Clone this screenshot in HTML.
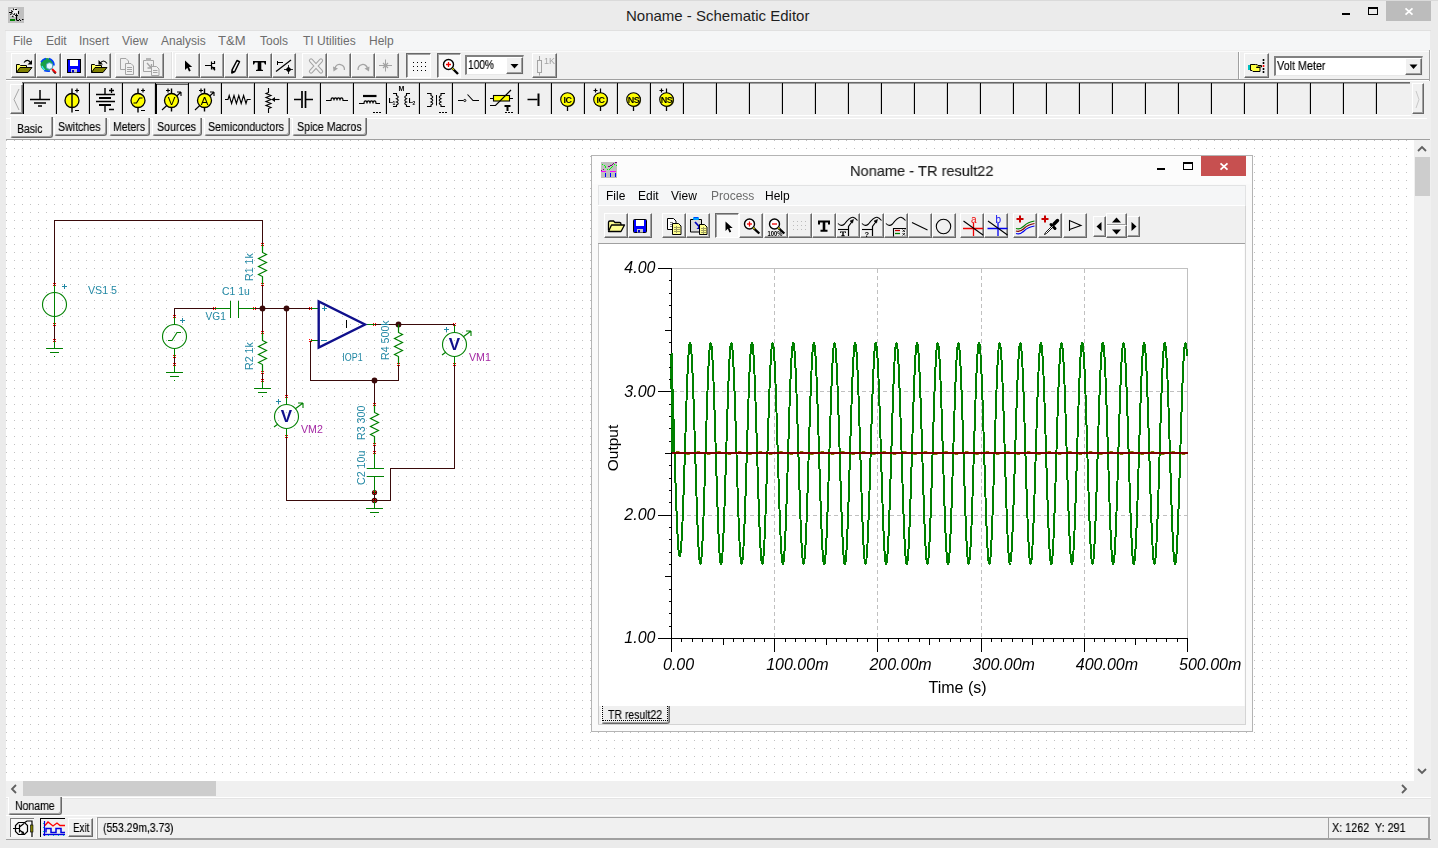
<!DOCTYPE html><html><head><meta charset="utf-8"><title>Noname - Schematic Editor</title><style>
*{box-sizing:border-box;margin:0;padding:0}
html,body{width:1438px;height:848px;overflow:hidden}
body{background:#ebebeb;font-family:"Liberation Sans",sans-serif;position:relative;font-size:12px;color:#000}
.a{position:absolute}
.t{position:absolute;white-space:nowrap;line-height:1}
.btn{position:absolute;background:#f0f0f0;border-top:1px solid #fff;border-left:1px solid #fff;border-right:1px solid #696969;border-bottom:1px solid #696969;box-shadow:inset -1px -1px 0 #a0a0a0}
.btnp{position:absolute;background:#f8f8f8;border-top:1px solid #696969;border-left:1px solid #696969;border-right:1px solid #fff;border-bottom:1px solid #fff;box-shadow:inset 1px 1px 0 #a0a0a0}
.sunk{position:absolute;border-top:1px solid #a0a0a0;border-left:1px solid #a0a0a0;border-right:1px solid #fff;border-bottom:1px solid #fff}
svg{position:absolute;overflow:visible}
</style></head><body>
<div class="a" style="left:0px;top:0px;width:1438px;height:1px;background:#dadada;"></div>
<div class="a" style="left:5px;top:30px;width:1426px;height:1px;background:#e0e0e0;"></div>
<div class="t" style="left:626px;top:8px;font-size:15px;color:#1e1e1e;">Noname - Schematic Editor</div>
<svg style="left:8px;top:7px" width="16" height="16" viewBox="0 0 16 16" ><rect width="16" height="16" fill="#c0c0c0"/><circle cx="6" cy="5.500" r="4.500" fill="#f4f4f4"/><path d="M1 5.500h3M3 3.500l2 1.500M2 7.500l2.500-1M5 1.500l1 1.500M7 2.500h2M4 9l1.500 1M7 6.500l-1.500 1.500M10.500 4v3" stroke="#000" stroke-width="1.100" fill="none"/><path d="M8.500 6.500v7" stroke="#000" stroke-width="1.200"/><path d="M7 8.500h3" stroke="#000"/><rect x="2" y="12" width="5" height="2" fill="#008000"/><path d="M9 13.500h2M12 13.500h1M14 12.500h1.500M11 12.500h1" stroke="#000" stroke-width="1"/></svg>
<div class="a" style="left:1342px;top:13px;width:8px;height:2px;background:#000;"></div>
<div class="a" style="left:1368px;top:7px;width:10px;height:8px;border:1px solid #000;border-top:2px solid #000"></div>
<div class="a" style="left:1386px;top:1px;width:45px;height:20px;background:#bcbcbc;"></div>
<svg style="left:1405px;top:8px" width="8" height="7" viewBox="0 0 8 7"><path d="M0.5 0.3 L7.5 6.7 M7.5 0.3 L0.5 6.7" stroke="#fff" stroke-width="1.8" fill="none"/></svg>
<div class="a" style="left:6px;top:31px;width:1424px;height:19px;background:#f5f6f7;"></div>
<div class="t" style="left:13px;top:35px;font-size:12px;color:#6d6d6d;">File</div>
<div class="t" style="left:46px;top:35px;font-size:12px;color:#6d6d6d;">Edit</div>
<div class="t" style="left:79px;top:35px;font-size:12px;color:#6d6d6d;">Insert</div>
<div class="t" style="left:122px;top:35px;font-size:12px;color:#6d6d6d;">View</div>
<div class="t" style="left:161px;top:35px;font-size:12px;color:#6d6d6d;">Analysis</div>
<div class="t" style="left:218px;top:35px;font-size:12px;color:#6d6d6d;transform:scaleX(1.09);transform-origin:0 0">T&amp;M</div>
<div class="t" style="left:260px;top:35px;font-size:12px;color:#6d6d6d;">Tools</div>
<div class="t" style="left:303px;top:35px;font-size:12px;color:#6d6d6d;">TI Utilities</div>
<div class="t" style="left:369px;top:35px;font-size:12px;color:#6d6d6d;">Help</div>
<div class="a" style="left:6px;top:50px;width:1425px;height:31px;background:#f0f0f0;"></div>
<div class="a" style="left:6px;top:79px;width:1425px;height:1px;background:#a0a0a0;"></div>
<div class="a" style="left:6px;top:80px;width:1425px;height:1px;background:#fff;"></div>
<div class="a" style="left:1429px;top:50px;width:1px;height:90px;background:#a4a4a4;"></div>
<div class="a" style="left:1430px;top:50px;width:1px;height:90px;background:#f8f8f8;"></div>
<div class="btn" style="left:11px;top:53px;width:25px;height:25px"></div>
<div class="btn" style="left:36px;top:53px;width:25px;height:25px"></div>
<div class="btn" style="left:61px;top:53px;width:25px;height:25px"></div>
<div class="btn" style="left:86px;top:53px;width:25px;height:25px"></div>
<div class="btn" style="left:115px;top:53px;width:25px;height:25px"></div>
<div class="btn" style="left:140px;top:53px;width:24px;height:25px"></div>
<div class="btn" style="left:175px;top:53px;width:25px;height:25px"></div>
<div class="btn" style="left:200px;top:53px;width:24px;height:25px"></div>
<div class="btn" style="left:224px;top:53px;width:24px;height:25px"></div>
<div class="btn" style="left:248px;top:53px;width:24px;height:25px"></div>
<div class="btn" style="left:272px;top:53px;width:24px;height:25px"></div>
<div class="btn" style="left:302px;top:53px;width:25px;height:25px"></div>
<div class="btn" style="left:327px;top:53px;width:24px;height:25px"></div>
<div class="btn" style="left:351px;top:53px;width:24px;height:25px"></div>
<div class="btn" style="left:375px;top:53px;width:24px;height:25px"></div>
<div class="a" style="left:171px;top:52px;width:1px;height:27px;background:#e2e2e2"></div><div class="a" style="left:172px;top:52px;width:1px;height:27px;background:#fff"></div>
<div class="a" style="left:6px;top:51px;width:1423px;height:1px;background:#fafafa"></div>
<div class="btnp" style="left:406px;top:53px;width:25px;height:25px"></div>
<div class="btnp" style="left:437px;top:53px;width:24px;height:25px"></div>
<div class="btn" style="left:532px;top:53px;width:25px;height:25px"></div>
<div class="a" style="left:465px;top:55px;width:59px;height:20px;background:#fff;border:1px solid #696969;border-top:2px solid #808080;border-left:2px solid #808080;border-right:1px solid #e8e8e8;border-bottom:1px solid #e8e8e8"></div>
<div class="btn" style="left:506px;top:57px;width:17px;height:17px"></div>
<div class="t" style="left:468.4px;top:59px;font-size:12.5px;color:#000;transform:scaleX(0.813);transform-origin:0 0;will-change:transform;-webkit-text-stroke:0.15px #000">100%</div>
<div class="a" style="left:1238px;top:52px;width:1px;height:27px;background:#a0a0a0"></div><div class="a" style="left:1239px;top:52px;width:1px;height:27px;background:#fff"></div>
<div class="btn" style="left:1244px;top:53px;width:25px;height:25px"></div>
<div class="a" style="left:1274px;top:56px;width:149px;height:20px;background:#fff;border:1px solid #696969;border-top:2px solid #808080;border-left:2px solid #808080;border-right:1px solid #e8e8e8;border-bottom:1px solid #e8e8e8"></div>
<div class="btn" style="left:1405px;top:58px;width:17px;height:17px"></div>
<div class="t" style="left:1277px;top:60px;font-size:12.5px;color:#000;transform:scaleX(0.862);transform-origin:0 0;will-change:transform;-webkit-text-stroke:0.15px #000">Volt Meter</div>
<svg style="left:0;top:0" width="1438" height="90" viewBox="0 0 1438 90"><path d="M510.500 64h8l-4 4.500z" fill="#000"/><path d="M1409.500 64.500h8l-4 4.500z" fill="#000"/><path d="M16.5 72.5V64.5h3l1 1h6v3" fill="#ffff60" stroke="#000"/><path d="M16.5 72.5l3.500-5h12l-4 5z" fill="#808000" stroke="#000"/><path d="M24 62.5q3.500-4.500 7 0.500" stroke="#000" fill="none" stroke-width="1.100"/><path d="M32 60v4.500h-4.500z" fill="#000"/><path d="M91.5 72.5V64.5h3l1 1h6v3" fill="#ffff60" stroke="#000"/><path d="M91.5 72.5l3.500-5h12l-4 5z" fill="#808000" stroke="#000"/><path d="M100 63.5q3.500-5 7 0" stroke="#000" fill="none" stroke-width="1.100"/><path d="M98.5 60v4.500h4.500z" fill="#000"/><circle cx="47" cy="64.500" r="6.500" fill="#18a048"/><path d="M41 62q2-3 5-3.500M44 70.500q3 1 6 0.500" stroke="#0040ff" stroke-width="1.500" fill="none"/><path d="M49 58.500q5 2 5 7" stroke="#0040ff" stroke-width="1.700" fill="none"/><path d="M42 66q1 3 3 4" stroke="#40e0ff" stroke-width="1.300" fill="none"/><circle cx="49.500" cy="66" r="3.300" fill="#e8f8ff" stroke="#50a0c0" stroke-width="1"/><path d="M52 69l4 4" stroke="#f00000" stroke-width="2"/><path d="M53 71.500l2.500 2.500" stroke="#000" stroke-width="1"/><rect x="67.500" y="59.500" width="13" height="13" fill="#0000ff" stroke="#000"/><rect x="70" y="60" width="8" height="6" fill="#fff"/><rect x="71" y="69" width="6" height="3.500" fill="#c8c8c8"/><rect x="72" y="70" width="2" height="2.500" fill="#0000c0"/><path d="M120.500 58.500h5.500l2.500 2.500v8.500h-8z" stroke="#a4a4a4" fill="#f0f0f0"/><path d="M125.500 63.500h5.500l2.500 2.500v8.500h-8z" stroke="#a4a4a4" fill="#f0f0f0"/><path d="M127 67.500h5M127 69.500h5M127 71.500h5" stroke="#a4a4a4"/><path d="M143.500 60.500h10v11h-10z" stroke="#a4a4a4" fill="#f0f0f0"/><rect x="146" y="58" width="5" height="3" fill="#b4b4b4"/><path d="M147 63l4 4.500M151.500 64v4h-4" stroke="#a4a4a4" stroke-width="1.300" fill="none"/><path d="M151.500 66.500h5l2.500 2.500v6.500h-7.500z" stroke="#a4a4a4" fill="#f0f0f0"/><path d="M153 70.500h4.500M153 72.500h4.500" stroke="#a4a4a4"/><path d="M185 60.500v9.500l2.300-2.200 1.700 3.700 1.700-0.800-1.700-3.600h3.200z" fill="#000"/><path d="M205 65.500h6M211.500 61.500v8M211.500 63.500h3v-2.500M211.500 67.500h3v3" stroke="#000" fill="none" stroke-width="1.200"/><path d="M212.500 66l3 3.500h-3z" fill="#000"/><path d="M237 60.500l2.500 1.200-4.700 9.800-3 1.500 0.300-3.200z" fill="#f8f8f8" stroke="#000" stroke-width="1.500" stroke-linejoin="round"/><path d="M231.800 73l3-1.500-2.700-1.300z" fill="#000"/><path d="M253 61h13v3.500h-1l-1-2h-2.700v7l1.700 0.600v0.900h-7v-0.900l1.700-0.600v-7h-2.700l-1 2h-1z" fill="#000"/><path d="M276 71.500L291 60" stroke="#000" fill="none" stroke-width="1.200"/><path d="M277.500 61v4M277 62.500h6" stroke="#000" fill="none"/><path d="M288.500 66.500l3 3-3 3-3-3z" fill="#000"/><path d="M284 69.500h9M288.500 65v9" stroke="#000" fill="none" stroke-width="0.800"/><path d="M311 60.500l10 11M321 60.500l-10 11" stroke="#a4a4a4" stroke-width="4.200" stroke-linecap="round"/><path d="M311 60.500l10 11M321 60.500l-10 11" stroke="#f0f0f0" stroke-width="2.200" stroke-linecap="round"/><path d="M335 68.500a4.700 4.700 0 1 1 9.400 1.500" stroke="#a4a4a4" stroke-width="1.300" fill="none"/><path d="M333 66.500l0.500 5 4.500-3z" fill="#a4a4a4"/><path d="M367.500 68.500a4.700 4.700 0 1 0-9.400 1.500" stroke="#a4a4a4" stroke-width="1.300" fill="none"/><path d="M369.500 66.500l-0.500 5-4.500-3z" fill="#a4a4a4"/><path d="M379 65.500h13M385.500 59.500v12" stroke="#a4a4a4" stroke-width="1"/><path d="M383 63l5 5M388 63l-5 5" stroke="#a4a4a4" stroke-width="1.200"/><rect x="413" y="62" width="1" height="1" fill="#000"/><rect x="413" y="66" width="1" height="1" fill="#000"/><rect x="413" y="70" width="1" height="1" fill="#000"/><rect x="417" y="62" width="1" height="1" fill="#000"/><rect x="417" y="66" width="1" height="1" fill="#000"/><rect x="417" y="70" width="1" height="1" fill="#000"/><rect x="421" y="62" width="1" height="1" fill="#000"/><rect x="421" y="66" width="1" height="1" fill="#000"/><rect x="421" y="70" width="1" height="1" fill="#000"/><rect x="425" y="62" width="1" height="1" fill="#000"/><rect x="425" y="66" width="1" height="1" fill="#000"/><rect x="425" y="70" width="1" height="1" fill="#000"/><circle cx="448.500" cy="64.500" r="5" fill="#fff" stroke="#000" stroke-width="1.400"/><path d="M446 64.500h5M448.500 62v5" stroke="#f00000" stroke-width="1.300"/><path d="M452.500 68.500l5.500 5.500" stroke="#000" stroke-width="2.400"/><path d="M452.300 68.300l1.500 1.500" stroke="#e0e000" stroke-width="1.200"/><path d="M539.500 56v4.500M539.500 72.500v3" stroke="#a4a4a4"/><rect x="537.500" y="60.500" width="4" height="12" fill="none" stroke="#a4a4a4"/><text x="544" y="63.500" font-family="Liberation Sans" font-size="9" fill="#a4a4a4">1K</text><path d="M1250.500 64.500h5q2.500 0 2.500 1h3.500v1.500h-5v0.500h3.500v4h-7l-1-1h-1.500z" fill="#ffff40" stroke="#000" stroke-width="1"/><rect x="1248" y="65" width="2" height="5" fill="#00c0c0"/><path d="M1263.500 59v2M1263.500 62v2M1263.500 68v2M1263.500 71v2" stroke="#000" stroke-width="1.600"/><path d="M1263.500 65v2" stroke="#ff0000" stroke-width="1.600"/></svg>
<div class="a" style="left:6px;top:81px;width:1425px;height:58px;background:#f0f0f0;"></div>
<div class="a" style="left:22px;top:82px;width:1388px;height:1px;background:#696969"></div>
<div class="a" style="left:22px;top:83px;width:1388px;height:1px;background:#a0a0a0"></div>
<div class="a" style="left:10px;top:115px;width:1401px;height:1px;background:#fff"></div>
<div class="a" style="left:6px;top:118px;width:1421px;height:1px;background:#fff"></div>
<div class="btn" style="left:10px;top:84px;width:13px;height:30px"></div>
<svg style="left:13px;top:89px" width="7" height="21" viewBox="0 0 7 21" ><path d="M6 0L1 10.500L6 21" stroke="#a8a8a8" fill="none"/></svg>
<div class="btn" style="left:1412px;top:83px;width:12px;height:31px"></div>
<svg style="left:1415px;top:91px" width="5" height="17" viewBox="0 0 5 17" ><path d="M1 0L4 8.500L1 17" stroke="#c8c8c8" fill="none"/></svg>
<div class="a" style="left:23px;top:83px;width:1px;height:31px;background:#000"></div>
<div class="a" style="left:56px;top:83px;width:1px;height:31px;background:#000"></div>
<div class="a" style="left:55px;top:84px;width:1px;height:30px;background:#d0d0d0"></div>
<div class="a" style="left:89px;top:83px;width:1px;height:31px;background:#000"></div>
<div class="a" style="left:88px;top:84px;width:1px;height:30px;background:#d0d0d0"></div>
<div class="a" style="left:122px;top:83px;width:1px;height:31px;background:#000"></div>
<div class="a" style="left:121px;top:84px;width:1px;height:30px;background:#d0d0d0"></div>
<div class="a" style="left:155px;top:83px;width:1px;height:31px;background:#000"></div>
<div class="a" style="left:154px;top:84px;width:1px;height:30px;background:#d0d0d0"></div>
<div class="a" style="left:188px;top:83px;width:1px;height:31px;background:#000"></div>
<div class="a" style="left:187px;top:84px;width:1px;height:30px;background:#d0d0d0"></div>
<div class="a" style="left:221px;top:83px;width:1px;height:31px;background:#000"></div>
<div class="a" style="left:220px;top:84px;width:1px;height:30px;background:#d0d0d0"></div>
<div class="a" style="left:254px;top:83px;width:1px;height:31px;background:#000"></div>
<div class="a" style="left:253px;top:84px;width:1px;height:30px;background:#d0d0d0"></div>
<div class="a" style="left:287px;top:83px;width:1px;height:31px;background:#000"></div>
<div class="a" style="left:286px;top:84px;width:1px;height:30px;background:#d0d0d0"></div>
<div class="a" style="left:320px;top:83px;width:1px;height:31px;background:#000"></div>
<div class="a" style="left:319px;top:84px;width:1px;height:30px;background:#d0d0d0"></div>
<div class="a" style="left:353px;top:83px;width:1px;height:31px;background:#000"></div>
<div class="a" style="left:352px;top:84px;width:1px;height:30px;background:#d0d0d0"></div>
<div class="a" style="left:386px;top:83px;width:1px;height:31px;background:#000"></div>
<div class="a" style="left:385px;top:84px;width:1px;height:30px;background:#d0d0d0"></div>
<div class="a" style="left:419px;top:83px;width:1px;height:31px;background:#000"></div>
<div class="a" style="left:418px;top:84px;width:1px;height:30px;background:#d0d0d0"></div>
<div class="a" style="left:452px;top:83px;width:1px;height:31px;background:#000"></div>
<div class="a" style="left:451px;top:84px;width:1px;height:30px;background:#d0d0d0"></div>
<div class="a" style="left:485px;top:83px;width:1px;height:31px;background:#000"></div>
<div class="a" style="left:484px;top:84px;width:1px;height:30px;background:#d0d0d0"></div>
<div class="a" style="left:518px;top:83px;width:1px;height:31px;background:#000"></div>
<div class="a" style="left:517px;top:84px;width:1px;height:30px;background:#d0d0d0"></div>
<div class="a" style="left:551px;top:83px;width:1px;height:31px;background:#000"></div>
<div class="a" style="left:550px;top:84px;width:1px;height:30px;background:#d0d0d0"></div>
<div class="a" style="left:584px;top:83px;width:1px;height:31px;background:#000"></div>
<div class="a" style="left:583px;top:84px;width:1px;height:30px;background:#d0d0d0"></div>
<div class="a" style="left:617px;top:83px;width:1px;height:31px;background:#000"></div>
<div class="a" style="left:616px;top:84px;width:1px;height:30px;background:#d0d0d0"></div>
<div class="a" style="left:650px;top:83px;width:1px;height:31px;background:#000"></div>
<div class="a" style="left:649px;top:84px;width:1px;height:30px;background:#d0d0d0"></div>
<div class="a" style="left:683px;top:83px;width:1px;height:31px;background:#000"></div>
<div class="a" style="left:682px;top:84px;width:1px;height:30px;background:#d0d0d0"></div>
<div class="a" style="left:716px;top:83px;width:1px;height:31px;background:#000"></div>
<div class="a" style="left:715px;top:84px;width:1px;height:30px;background:#d0d0d0"></div>
<div class="a" style="left:749px;top:83px;width:1px;height:31px;background:#000"></div>
<div class="a" style="left:748px;top:84px;width:1px;height:30px;background:#d0d0d0"></div>
<div class="a" style="left:782px;top:83px;width:1px;height:31px;background:#000"></div>
<div class="a" style="left:781px;top:84px;width:1px;height:30px;background:#d0d0d0"></div>
<div class="a" style="left:815px;top:83px;width:1px;height:31px;background:#000"></div>
<div class="a" style="left:814px;top:84px;width:1px;height:30px;background:#d0d0d0"></div>
<div class="a" style="left:848px;top:83px;width:1px;height:31px;background:#000"></div>
<div class="a" style="left:847px;top:84px;width:1px;height:30px;background:#d0d0d0"></div>
<div class="a" style="left:881px;top:83px;width:1px;height:31px;background:#000"></div>
<div class="a" style="left:880px;top:84px;width:1px;height:30px;background:#d0d0d0"></div>
<div class="a" style="left:914px;top:83px;width:1px;height:31px;background:#000"></div>
<div class="a" style="left:913px;top:84px;width:1px;height:30px;background:#d0d0d0"></div>
<div class="a" style="left:947px;top:83px;width:1px;height:31px;background:#000"></div>
<div class="a" style="left:946px;top:84px;width:1px;height:30px;background:#d0d0d0"></div>
<div class="a" style="left:980px;top:83px;width:1px;height:31px;background:#000"></div>
<div class="a" style="left:979px;top:84px;width:1px;height:30px;background:#d0d0d0"></div>
<div class="a" style="left:1013px;top:83px;width:1px;height:31px;background:#000"></div>
<div class="a" style="left:1012px;top:84px;width:1px;height:30px;background:#d0d0d0"></div>
<div class="a" style="left:1046px;top:83px;width:1px;height:31px;background:#000"></div>
<div class="a" style="left:1045px;top:84px;width:1px;height:30px;background:#d0d0d0"></div>
<div class="a" style="left:1079px;top:83px;width:1px;height:31px;background:#000"></div>
<div class="a" style="left:1078px;top:84px;width:1px;height:30px;background:#d0d0d0"></div>
<div class="a" style="left:1112px;top:83px;width:1px;height:31px;background:#000"></div>
<div class="a" style="left:1111px;top:84px;width:1px;height:30px;background:#d0d0d0"></div>
<div class="a" style="left:1145px;top:83px;width:1px;height:31px;background:#000"></div>
<div class="a" style="left:1144px;top:84px;width:1px;height:30px;background:#d0d0d0"></div>
<div class="a" style="left:1178px;top:83px;width:1px;height:31px;background:#000"></div>
<div class="a" style="left:1177px;top:84px;width:1px;height:30px;background:#d0d0d0"></div>
<div class="a" style="left:1211px;top:83px;width:1px;height:31px;background:#000"></div>
<div class="a" style="left:1210px;top:84px;width:1px;height:30px;background:#d0d0d0"></div>
<div class="a" style="left:1244px;top:83px;width:1px;height:31px;background:#000"></div>
<div class="a" style="left:1243px;top:84px;width:1px;height:30px;background:#d0d0d0"></div>
<div class="a" style="left:1277px;top:83px;width:1px;height:31px;background:#000"></div>
<div class="a" style="left:1276px;top:84px;width:1px;height:30px;background:#d0d0d0"></div>
<div class="a" style="left:1310px;top:83px;width:1px;height:31px;background:#000"></div>
<div class="a" style="left:1309px;top:84px;width:1px;height:30px;background:#d0d0d0"></div>
<div class="a" style="left:1343px;top:83px;width:1px;height:31px;background:#000"></div>
<div class="a" style="left:1342px;top:84px;width:1px;height:30px;background:#d0d0d0"></div>
<div class="a" style="left:1376px;top:83px;width:1px;height:31px;background:#000"></div>
<div class="a" style="left:1375px;top:84px;width:1px;height:30px;background:#d0d0d0"></div>
<svg style="left:0;top:0" width="1438" height="120" viewBox="0 0 1438 120"><path d="M156.500 113.500V84" stroke="#000" stroke-width="1" fill="none" shape-rendering="crispEdges"/><path d="M157 84.500H188" stroke="#606060" stroke-width="1" fill="none" shape-rendering="crispEdges"/><path d="M40 90v9.500M30 99.500h20M34 103h12M38 106h4" stroke="#000" fill="none" stroke-width="1.500"/><circle cx="72" cy="100.500" r="7" fill="#ffff00" stroke="#000" stroke-width="1.300"/><path d="M72 88.500v24" stroke="#000" fill="none" stroke-width="1.400"/><path d="M75 90.500h4M77 88.500v4M75 110.500h4" stroke="#000" fill="none" stroke-width="1.200"/><path d="M105 88v6M96 94.500h19M96 101.500h19M105 105v7" stroke="#000" fill="none" stroke-width="1.400"/><path d="M99 98h12M99 105h12" stroke="#000" fill="none" stroke-width="2.200"/><path d="M109 90.500h5M111.5 88v5M109 109.500h5" stroke="#000" fill="none" stroke-width="1.300"/><circle cx="138" cy="100.500" r="7" fill="#ffff00" stroke="#000" stroke-width="1.300"/><path d="M138 88.500v5M138 107.500v5" stroke="#000" fill="none" stroke-width="1.400"/><path d="M133.5 103h3l3-5h3" stroke="#000" fill="none" stroke-width="1.200"/><path d="M141 90.500h4M143 88.500v4M141 110.500h4" stroke="#000" fill="none" stroke-width="1.200"/><path d="M162.0 110L181.0 92M181.0 92h-4M181.0 92v4" stroke="#000" fill="none" stroke-width="1.100"/><circle cx="171.5" cy="100.500" r="7" fill="#ffff00" stroke="#000" stroke-width="1.300"/><path d="M171.5 88.500v5M171.5 107.500v4" stroke="#000" fill="none" stroke-width="1.400"/><path d="M166.0 90.500h4M168.0 88.500v4" stroke="#000" fill="none" stroke-width="1.200"/><text x="171.5" y="104.500" text-anchor="middle" font-family="Liberation Sans" font-size="11.500" fill="#000">V</text><path d="M195.0 110L214.0 92M214.0 92h-4M214.0 92v4" stroke="#000" fill="none" stroke-width="1.100"/><circle cx="204.5" cy="100.500" r="7" fill="#ffff00" stroke="#000" stroke-width="1.300"/><path d="M204.5 88.500v5M204.5 107.500v4" stroke="#000" fill="none" stroke-width="1.400"/><path d="M199.0 90.500h4M201.0 88.500v4" stroke="#000" fill="none" stroke-width="1.200"/><text x="204.5" y="104.500" text-anchor="middle" font-family="Liberation Sans" font-size="11.500" fill="#000">A</text><path d="M225 99.500h3l1.200-4l2.400 8l2.400-8l2.400 8l2.400-8l2.400 8l2.400-8l2.400 8l1.200-4h3.500" stroke="#000" fill="none" stroke-width="1.100" stroke-linejoin="miter"/><path d="M268.500 88v4.500l-2.500 1l5 2l-5 2l5 2l-5 2l5 2l-5 2l5 2l-2.500 1v4.500" stroke="#000" fill="none" stroke-width="1.100"/><path d="M279.500 99.500h-7.500" stroke="#000" fill="none" stroke-width="1.100"/><path d="M271.500 99.500l3.500-2.500v5z" fill="#000"/><path d="M294 99.500h7M306 99.500h7" stroke="#000" fill="none" stroke-width="1.400"/><path d="M302 91v17M305.500 91v17" stroke="#000" fill="none" stroke-width="1.700"/><path d="M326 100.5H331a1.50 2.600 0 0 1 3.00 0a1.50 2.600 0 0 1 3.00 0a1.50 2.600 0 0 1 3.00 0a1.50 2.600 0 0 1 3.00 0H348" stroke="#000" fill="none" stroke-width="1.100"/><path d="M363 96h13.500" stroke="#000" fill="none" stroke-width="2.200"/><path d="M359 103.5H364a1.50 2.600 0 0 1 3.00 0a1.50 2.600 0 0 1 3.00 0a1.50 2.600 0 0 1 3.00 0a1.50 2.600 0 0 1 3.00 0H380" stroke="#000" fill="none" stroke-width="1.100"/><path d="M373 112.500h2M376 112.500h2M379 112.500h2" stroke="#000" stroke-width="1.200"/><path d="M393 93.500H396.5V95.500q3.5 1.600 0 3.200q3.5 1.600 0 3.200q3.5 1.600 0 3.200V106.500H393" stroke="#000" fill="none" stroke-width="1.100"/><path d="M410 93.500H406.5V95.500q-3.5 1.600 0 3.200q-3.5 1.600 0 3.200q-3.5 1.600 0 3.200V106.500H410" stroke="#000" fill="none" stroke-width="1.100"/><text x="398.500" y="91" font-family="Liberation Sans" font-size="7" font-weight="bold">M</text><text x="388.500" y="103" font-family="Liberation Sans" font-size="7.500" font-weight="bold">L</text><text x="392.500" y="105" font-family="Liberation Sans" font-size="5" font-weight="bold">1</text><text x="408.500" y="103" font-family="Liberation Sans" font-size="7.500" font-weight="bold">L</text><text x="412.500" y="105" font-family="Liberation Sans" font-size="5" font-weight="bold">2</text><path d="M427 93.500H431.0V95.500q3.5 1.600 0 3.200q3.5 1.600 0 3.200q3.5 1.600 0 3.200V106.500H427" stroke="#000" fill="none" stroke-width="1.100"/><path d="M445 93.500H441.0V95.500q-3.5 1.600 0 3.200q-3.5 1.600 0 3.200q-3.5 1.600 0 3.200V106.500H445" stroke="#000" fill="none" stroke-width="1.100"/><path d="M436.500 95v10.500" stroke="#000" fill="none" stroke-width="1"/><path d="M439 112.500h2M442 112.500h2M445 112.500h2" stroke="#000" stroke-width="1.200"/><path d="M458 100.500h5.500M467.500 94.500l5.500 6h6" stroke="#000" fill="none" stroke-width="1.100"/><circle cx="464.800" cy="100.500" r="1.100" fill="#f0f0f0" stroke="#000" stroke-width="0.900"/><rect x="493.500" y="95.500" width="16" height="5.500" fill="#ffff00" stroke="#000" stroke-width="1.100"/><path d="M490 98.500h3.500M509.500 98.500h3.500" stroke="#000" stroke-width="1.200"/><path d="M490 105.500h5.500L511 90" stroke="#000" fill="none" stroke-width="1.200"/><path d="M504.500 106h6M507.500 106v5" stroke="#000" stroke-width="2"/><path d="M505 112.500h2M508 112.500h2M511 112.500h2" stroke="#000" stroke-width="1.200"/><path d="M527.500 99.500h10" stroke="#000" stroke-width="1.500"/><path d="M538.500 93.500v12.500" stroke="#000" stroke-width="2"/><circle cx="568.1" cy="100.100" r="7" fill="#404000"/><circle cx="567.5" cy="99.500" r="6.800" fill="#ffff00" stroke="#000" stroke-width="1.100"/><path d="M567.5 106.500v4.500" stroke="#000" stroke-width="1.300"/><text x="567.5" y="103" text-anchor="middle" font-family="Liberation Sans" font-size="9" font-weight="bold" letter-spacing="-0.500">IC</text><circle cx="601.1" cy="100.100" r="7" fill="#404000"/><circle cx="600.5" cy="99.500" r="6.800" fill="#ffff00" stroke="#000" stroke-width="1.100"/><path d="M600.5 106.500v4.500" stroke="#000" stroke-width="1.300"/><text x="600.5" y="103" text-anchor="middle" font-family="Liberation Sans" font-size="9" font-weight="bold" letter-spacing="-0.500">IC</text><path d="M593.5 90.500h4M595.5 88.500v4M600.5 88.500v4.500" stroke="#000" stroke-width="1.200"/><circle cx="634.1" cy="100.100" r="7" fill="#404000"/><circle cx="633.5" cy="99.500" r="6.800" fill="#ffff00" stroke="#000" stroke-width="1.100"/><path d="M633.5 106.500v4.500" stroke="#000" stroke-width="1.300"/><text x="633.5" y="103" text-anchor="middle" font-family="Liberation Sans" font-size="9" font-weight="bold" letter-spacing="-0.500">NS</text><circle cx="667.1" cy="100.100" r="7" fill="#404000"/><circle cx="666.5" cy="99.500" r="6.800" fill="#ffff00" stroke="#000" stroke-width="1.100"/><path d="M666.5 106.500v4.500" stroke="#000" stroke-width="1.300"/><text x="666.5" y="103" text-anchor="middle" font-family="Liberation Sans" font-size="9" font-weight="bold" letter-spacing="-0.500">NS</text><path d="M659.5 90.500h4M661.5 88.500v4M666.5 88.500v4.500" stroke="#000" stroke-width="1.200"/></svg>
<div class="a" style="left:54px;top:118px;width:53px;height:18px;background:#f0f0f0;border-left:1px solid #fff;border-right:1px solid #696969;border-bottom:1px solid #696969;box-shadow:inset -1px -1px 0 #a0a0a0;border-radius:0 0 3px 3px"></div>
<div class="t" style="left:58.2px;top:121px;font-size:12.5px;color:#000;transform:scaleX(0.850);transform-origin:0 0;will-change:transform;-webkit-text-stroke:0.15px #000">Switches</div>
<div class="a" style="left:109px;top:118px;width:41px;height:18px;background:#f0f0f0;border-left:1px solid #fff;border-right:1px solid #696969;border-bottom:1px solid #696969;box-shadow:inset -1px -1px 0 #a0a0a0;border-radius:0 0 3px 3px"></div>
<div class="t" style="left:113.2px;top:121px;font-size:12.5px;color:#000;transform:scaleX(0.838);transform-origin:0 0;will-change:transform;-webkit-text-stroke:0.15px #000">Meters</div>
<div class="a" style="left:152px;top:118px;width:50px;height:18px;background:#f0f0f0;border-left:1px solid #fff;border-right:1px solid #696969;border-bottom:1px solid #696969;box-shadow:inset -1px -1px 0 #a0a0a0;border-radius:0 0 3px 3px"></div>
<div class="t" style="left:157.2px;top:121px;font-size:12.5px;color:#000;transform:scaleX(0.851);transform-origin:0 0;will-change:transform;-webkit-text-stroke:0.15px #000">Sources</div>
<div class="a" style="left:204px;top:118px;width:86px;height:18px;background:#f0f0f0;border-left:1px solid #fff;border-right:1px solid #696969;border-bottom:1px solid #696969;box-shadow:inset -1px -1px 0 #a0a0a0;border-radius:0 0 3px 3px"></div>
<div class="t" style="left:208.2px;top:121px;font-size:12.5px;color:#000;transform:scaleX(0.848);transform-origin:0 0;will-change:transform;-webkit-text-stroke:0.15px #000">Semiconductors</div>
<div class="a" style="left:292px;top:118px;width:75px;height:18px;background:#f0f0f0;border-left:1px solid #fff;border-right:1px solid #696969;border-bottom:1px solid #696969;box-shadow:inset -1px -1px 0 #a0a0a0;border-radius:0 0 3px 3px"></div>
<div class="t" style="left:296.7px;top:121px;font-size:12.5px;color:#000;transform:scaleX(0.854);transform-origin:0 0;will-change:transform;-webkit-text-stroke:0.15px #000">Spice Macros</div>
<div class="a" style="left:10px;top:117px;width:43px;height:21px;background:#f0f0f0;border-left:1px solid #fff;border-right:1px solid #696969;border-bottom:1px solid #696969;box-shadow:inset -1px -1px 0 #a0a0a0;border-radius:0 0 3px 3px"></div>
<div class="t" style="left:16.5px;top:123px;font-size:12.5px;color:#000;transform:scaleX(0.834);transform-origin:0 0;will-change:transform;-webkit-text-stroke:0.15px #000">Basic</div>
<div class="a" style="left:6px;top:139px;width:1424px;height:1px;background:#a0a0a0;"></div>
<div class="a" style="left:6px;top:140px;width:1408px;height:640px;background-color:#fff;background-image:radial-gradient(circle at 0.5px 0.5px,#c0c0c0 0.55px,transparent 0.9px);background-size:8px 8px;background-position:0 0"></div>
<div class="a" style="left:6px;top:780px;width:1408px;height:1px;background:#fff;"></div>
<svg style="left:0;top:0" width="1438" height="848" viewBox="0 0 1438 848"><path d="M54.5 284.5 L54.5 220.5 L262.5 220.5 L262.5 244.5" stroke="#3a0a0a" stroke-width="1" fill="none" shape-rendering="crispEdges"/><path d="M54.5 324.5 L54.5 340.5" stroke="#3a0a0a" stroke-width="1" fill="none" shape-rendering="crispEdges"/><path d="M174.5 316.5 L174.5 308.5 L214.5 308.5" stroke="#3a0a0a" stroke-width="1" fill="none" shape-rendering="crispEdges"/><path d="M174.5 356.5 L174.5 364.5" stroke="#3a0a0a" stroke-width="1" fill="none" shape-rendering="crispEdges"/><path d="M254.5 308.5 L310.5 308.5" stroke="#3a0a0a" stroke-width="1" fill="none" shape-rendering="crispEdges"/><path d="M262.5 284.5 L262.5 332.5" stroke="#3a0a0a" stroke-width="1" fill="none" shape-rendering="crispEdges"/><path d="M262.5 372.5 L262.5 380.5" stroke="#3a0a0a" stroke-width="1" fill="none" shape-rendering="crispEdges"/><path d="M286.5 308.5 L286.5 396.5" stroke="#3a0a0a" stroke-width="1" fill="none" shape-rendering="crispEdges"/><path d="M286.5 436.5 L286.5 500.5 L390.5 500.5 L390.5 468.5 L454.5 468.5 L454.5 364.5" stroke="#3a0a0a" stroke-width="1" fill="none" shape-rendering="crispEdges"/><path d="M310.5 340.5 L310.5 380.5 L398.5 380.5 L398.5 364.5" stroke="#3a0a0a" stroke-width="1" fill="none" shape-rendering="crispEdges"/><path d="M374.5 324.5 L454.5 324.5" stroke="#3a0a0a" stroke-width="1" fill="none" shape-rendering="crispEdges"/><path d="M374.5 380.5 L374.5 404.5" stroke="#3a0a0a" stroke-width="1" fill="none" shape-rendering="crispEdges"/><path d="M374.5 444.5 L374.5 452.5" stroke="#3a0a0a" stroke-width="1" fill="none" shape-rendering="crispEdges"/><path d="M374.5 492.5 L374.5 500.5" stroke="#3a0a0a" stroke-width="1" fill="none" shape-rendering="crispEdges"/><path d="M54.5 284.5 L54.5 324.5" stroke="#008000" stroke-width="1" fill="none" shape-rendering="crispEdges"/><circle cx="54.5" cy="304.5" r="12" fill="none" stroke="#008000" stroke-width="1.1"/><path d="M62 286.5h5M64.5 284v5" stroke="#2288a4" stroke-width="1" shape-rendering="crispEdges"/><rect x="53" y="283" width="1" height="1" fill="#ff0000"/><rect x="53" y="285" width="1" height="1" fill="#ff0000"/><rect x="55" y="283" width="1" height="1" fill="#ff0000"/><rect x="55" y="285" width="1" height="1" fill="#ff0000"/><rect x="53" y="323" width="1" height="1" fill="#ff0000"/><rect x="53" y="325" width="1" height="1" fill="#ff0000"/><rect x="55" y="323" width="1" height="1" fill="#ff0000"/><rect x="55" y="325" width="1" height="1" fill="#ff0000"/><rect x="53" y="339" width="1" height="1" fill="#ff0000"/><rect x="53" y="341" width="1" height="1" fill="#ff0000"/><rect x="55" y="339" width="1" height="1" fill="#ff0000"/><rect x="55" y="341" width="1" height="1" fill="#ff0000"/><path d="M54.5 340.5 L54.5 348.5" stroke="#008000" stroke-width="1" fill="none" shape-rendering="crispEdges"/><path d="M45.5 348.5 L62.5 348.5" stroke="#008000" stroke-width="1" fill="none" shape-rendering="crispEdges"/><path d="M49.5 352.5 L58.5 352.5" stroke="#008000" stroke-width="1" fill="none" shape-rendering="crispEdges"/><rect x="54" y="356" width="1" height="1" fill="#008000"/><text x="88" y="294" font-family="Liberation Sans" font-size="10.67" fill="#2288a4" text-anchor="start" >VS1 5</text><path d="M174.5 316.5 L174.5 324.5" stroke="#008000" stroke-width="1" fill="none" shape-rendering="crispEdges"/><path d="M174.5 348.5 L174.5 356.5" stroke="#008000" stroke-width="1" fill="none" shape-rendering="crispEdges"/><circle cx="174.5" cy="336.5" r="12" fill="none" stroke="#008000" stroke-width="1.1"/><path d="M168 340.500h4l5-8h4" stroke="#008000" stroke-width="1.1" fill="none"/><path d="M180 320.5h5M182.5 318v5" stroke="#2288a4" stroke-width="1" shape-rendering="crispEdges"/><rect x="173" y="315" width="1" height="1" fill="#ff0000"/><rect x="173" y="317" width="1" height="1" fill="#ff0000"/><rect x="175" y="315" width="1" height="1" fill="#ff0000"/><rect x="175" y="317" width="1" height="1" fill="#ff0000"/><rect x="173" y="355" width="1" height="1" fill="#ff0000"/><rect x="173" y="357" width="1" height="1" fill="#ff0000"/><rect x="175" y="355" width="1" height="1" fill="#ff0000"/><rect x="175" y="357" width="1" height="1" fill="#ff0000"/><rect x="173" y="363" width="1" height="1" fill="#ff0000"/><rect x="173" y="365" width="1" height="1" fill="#ff0000"/><rect x="175" y="363" width="1" height="1" fill="#ff0000"/><rect x="175" y="365" width="1" height="1" fill="#ff0000"/><path d="M174.5 364.5 L174.5 372.5" stroke="#008000" stroke-width="1" fill="none" shape-rendering="crispEdges"/><path d="M165.5 372.5 L182.5 372.5" stroke="#008000" stroke-width="1" fill="none" shape-rendering="crispEdges"/><path d="M169.5 376.5 L178.5 376.5" stroke="#008000" stroke-width="1" fill="none" shape-rendering="crispEdges"/><rect x="174" y="380" width="1" height="1" fill="#008000"/><text x="205.5" y="320" font-family="Liberation Sans" font-size="10.67" fill="#2288a4" text-anchor="start"  textLength="20.3" lengthAdjust="spacingAndGlyphs">VG1</text><path d="M214.5 308.5 L230.5 308.5" stroke="#008000" stroke-width="1" fill="none" shape-rendering="crispEdges"/><path d="M238.5 308.5 L254.5 308.5" stroke="#008000" stroke-width="1" fill="none" shape-rendering="crispEdges"/><path d="M230.5 300.5 L230.5 317.5" stroke="#008000" stroke-width="1" fill="none" shape-rendering="crispEdges"/><path d="M238.5 300.5 L238.5 317.5" stroke="#008000" stroke-width="1" fill="none" shape-rendering="crispEdges"/><rect x="213" y="307" width="1" height="1" fill="#ff0000"/><rect x="213" y="309" width="1" height="1" fill="#ff0000"/><rect x="215" y="307" width="1" height="1" fill="#ff0000"/><rect x="215" y="309" width="1" height="1" fill="#ff0000"/><rect x="253" y="307" width="1" height="1" fill="#ff0000"/><rect x="253" y="309" width="1" height="1" fill="#ff0000"/><rect x="255" y="307" width="1" height="1" fill="#ff0000"/><rect x="255" y="309" width="1" height="1" fill="#ff0000"/><text x="222" y="295" font-family="Liberation Sans" font-size="10.67" fill="#2288a4" text-anchor="start"  textLength="27.8" lengthAdjust="spacingAndGlyphs">C1 1u</text><path d="M262.5 244.5 L262.5 252.5 L266.5 254.5 L258.5 258.5 L266.5 262.5 L258.5 266.5 L266.5 270.5 L258.5 274.5 L262.5 276.5 L262.5 284.5" stroke="#008000" stroke-width="1.2" fill="none"/><rect x="261" y="243" width="1" height="1" fill="#ff0000"/><rect x="261" y="245" width="1" height="1" fill="#ff0000"/><rect x="263" y="243" width="1" height="1" fill="#ff0000"/><rect x="263" y="245" width="1" height="1" fill="#ff0000"/><rect x="261" y="283" width="1" height="1" fill="#ff0000"/><rect x="261" y="285" width="1" height="1" fill="#ff0000"/><rect x="263" y="283" width="1" height="1" fill="#ff0000"/><rect x="263" y="285" width="1" height="1" fill="#ff0000"/><text x="253" y="281" font-family="Liberation Sans" font-size="10.67" fill="#2288a4" text-anchor="start" transform="rotate(-90 253 281)" >R1 1k</text><path d="M262.5 332.5 L262.5 340.5 L266.5 342.5 L258.5 346.5 L266.5 350.5 L258.5 354.5 L266.5 358.5 L258.5 362.5 L262.5 364.5 L262.5 372.5" stroke="#008000" stroke-width="1.2" fill="none"/><rect x="261" y="331" width="1" height="1" fill="#ff0000"/><rect x="261" y="333" width="1" height="1" fill="#ff0000"/><rect x="263" y="331" width="1" height="1" fill="#ff0000"/><rect x="263" y="333" width="1" height="1" fill="#ff0000"/><rect x="261" y="371" width="1" height="1" fill="#ff0000"/><rect x="261" y="373" width="1" height="1" fill="#ff0000"/><rect x="263" y="371" width="1" height="1" fill="#ff0000"/><rect x="263" y="373" width="1" height="1" fill="#ff0000"/><rect x="261" y="379" width="1" height="1" fill="#ff0000"/><rect x="261" y="381" width="1" height="1" fill="#ff0000"/><rect x="263" y="379" width="1" height="1" fill="#ff0000"/><rect x="263" y="381" width="1" height="1" fill="#ff0000"/><path d="M262.5 380.5 L262.5 388.5" stroke="#008000" stroke-width="1" fill="none" shape-rendering="crispEdges"/><path d="M253.5 388.5 L270.5 388.5" stroke="#008000" stroke-width="1" fill="none" shape-rendering="crispEdges"/><path d="M257.5 392.5 L266.5 392.5" stroke="#008000" stroke-width="1" fill="none" shape-rendering="crispEdges"/><rect x="262" y="396" width="1" height="1" fill="#008000"/><text x="253" y="370" font-family="Liberation Sans" font-size="10.67" fill="#2288a4" text-anchor="start" transform="rotate(-90 253 370)" >R2 1k</text><circle cx="262.5" cy="308.5" r="2.9" fill="#3a0a0a"/><circle cx="286.5" cy="308.5" r="2.9" fill="#3a0a0a"/><circle cx="398.5" cy="324.5" r="2.9" fill="#3a0a0a"/><circle cx="374.5" cy="380.5" r="2.9" fill="#3a0a0a"/><circle cx="374.5" cy="492.5" r="2.6" fill="#3a0a0a"/><circle cx="374.5" cy="500.5" r="2.8" fill="#3a0a0a"/><path d="M310.5 308.5 L318.5 308.5" stroke="#008000" stroke-width="1" fill="none" shape-rendering="crispEdges"/><path d="M310.5 340.5 L318.5 340.5" stroke="#008000" stroke-width="1" fill="none" shape-rendering="crispEdges"/><path d="M366.5 324.5 L374.5 324.5" stroke="#008000" stroke-width="1" fill="none" shape-rendering="crispEdges"/><path d="M318.700 301.500L318.700 347.500L365 324.500Z" fill="none" stroke="#10108c" stroke-width="2.4" stroke-linejoin="miter"/><path d="M322 308.5h5M324.5 306v5" stroke="#2288a4" stroke-width="1" shape-rendering="crispEdges"/><path d="M321 340.500h6" stroke="#2288a4" shape-rendering="crispEdges"/><path d="M346.500 320v8" stroke="#000" shape-rendering="crispEdges"/><rect x="309" y="307" width="1" height="1" fill="#ff0000"/><rect x="309" y="309" width="1" height="1" fill="#ff0000"/><rect x="311" y="307" width="1" height="1" fill="#ff0000"/><rect x="311" y="309" width="1" height="1" fill="#ff0000"/><rect x="309" y="339" width="1" height="1" fill="#ff0000"/><rect x="309" y="341" width="1" height="1" fill="#ff0000"/><rect x="311" y="339" width="1" height="1" fill="#ff0000"/><rect x="311" y="341" width="1" height="1" fill="#ff0000"/><rect x="373" y="323" width="1" height="1" fill="#ff0000"/><rect x="373" y="325" width="1" height="1" fill="#ff0000"/><rect x="375" y="323" width="1" height="1" fill="#ff0000"/><rect x="375" y="325" width="1" height="1" fill="#ff0000"/><text x="342.3" y="361" font-family="Liberation Sans" font-size="10.67" fill="#2288a4" text-anchor="start"  textLength="20.3" lengthAdjust="spacingAndGlyphs">IOP1</text><path d="M398.5 324.5 L398.5 332.5 L402.5 334.5 L394.5 338.5 L402.5 342.5 L394.5 346.5 L402.5 350.5 L394.5 354.5 L398.5 356.5 L398.5 364.5" stroke="#008000" stroke-width="1.2" fill="none"/><rect x="397" y="363" width="1" height="1" fill="#ff0000"/><rect x="397" y="365" width="1" height="1" fill="#ff0000"/><rect x="399" y="363" width="1" height="1" fill="#ff0000"/><rect x="399" y="365" width="1" height="1" fill="#ff0000"/><clipPath id="cr4"><rect x="376" y="320" width="16" height="44"/></clipPath><g clip-path="url(#cr4)"><text x="389" y="360" font-family="Liberation Sans" font-size="10.67" fill="#2288a4" text-anchor="start" transform="rotate(-90 389 360)" >R4 500k</text></g><path d="M374.5 404.5 L374.5 412.5 L378.5 414.5 L370.5 418.5 L378.5 422.5 L370.5 426.5 L378.5 430.5 L370.5 434.5 L374.5 436.5 L374.5 444.5" stroke="#008000" stroke-width="1.2" fill="none"/><rect x="373" y="403" width="1" height="1" fill="#ff0000"/><rect x="373" y="405" width="1" height="1" fill="#ff0000"/><rect x="375" y="403" width="1" height="1" fill="#ff0000"/><rect x="375" y="405" width="1" height="1" fill="#ff0000"/><rect x="373" y="443" width="1" height="1" fill="#ff0000"/><rect x="373" y="445" width="1" height="1" fill="#ff0000"/><rect x="375" y="443" width="1" height="1" fill="#ff0000"/><rect x="375" y="445" width="1" height="1" fill="#ff0000"/><rect x="373" y="451" width="1" height="1" fill="#ff0000"/><rect x="373" y="453" width="1" height="1" fill="#ff0000"/><rect x="375" y="451" width="1" height="1" fill="#ff0000"/><rect x="375" y="453" width="1" height="1" fill="#ff0000"/><text x="365" y="440" font-family="Liberation Sans" font-size="10.67" fill="#2288a4" text-anchor="start" transform="rotate(-90 365 440)" >R3 300</text><path d="M374.5 452.5 L374.5 468.5" stroke="#008000" stroke-width="1" fill="none" shape-rendering="crispEdges"/><path d="M374.5 476.5 L374.5 492.5" stroke="#008000" stroke-width="1" fill="none" shape-rendering="crispEdges"/><path d="M366.5 468.5 L383.5 468.5" stroke="#008000" stroke-width="1" fill="none" shape-rendering="crispEdges"/><path d="M366.5 476.5 L383.5 476.5" stroke="#008000" stroke-width="1" fill="none" shape-rendering="crispEdges"/><rect x="373" y="491" width="1" height="1" fill="#ff0000"/><rect x="373" y="493" width="1" height="1" fill="#ff0000"/><rect x="375" y="491" width="1" height="1" fill="#ff0000"/><rect x="375" y="493" width="1" height="1" fill="#ff0000"/><rect x="373" y="499" width="1" height="1" fill="#ff0000"/><rect x="373" y="501" width="1" height="1" fill="#ff0000"/><rect x="375" y="499" width="1" height="1" fill="#ff0000"/><rect x="375" y="501" width="1" height="1" fill="#ff0000"/><text x="365" y="485" font-family="Liberation Sans" font-size="10.67" fill="#2288a4" text-anchor="start" transform="rotate(-90 365 485)" >C2 10u</text><path d="M374.5 500.5 L374.5 508.5" stroke="#008000" stroke-width="1" fill="none" shape-rendering="crispEdges"/><path d="M365.5 508.5 L382.5 508.5" stroke="#008000" stroke-width="1" fill="none" shape-rendering="crispEdges"/><path d="M369.5 512.5 L378.5 512.5" stroke="#008000" stroke-width="1" fill="none" shape-rendering="crispEdges"/><rect x="374" y="516" width="1" height="1" fill="#008000"/><path d="M454.5 324.5 L454.5 332.5" stroke="#008000" stroke-width="1" fill="none" shape-rendering="crispEdges"/><path d="M454.5 356.5 L454.5 364.5" stroke="#008000" stroke-width="1" fill="none" shape-rendering="crispEdges"/><circle cx="454.5" cy="344.5" r="12" fill="none" stroke="#008000" stroke-width="1.1"/><path d="M442 355L446 352M463 337L471 331M471 331h-5M471 331v5" stroke="#008000" stroke-width="1.1" fill="none"/><text x="454.5" y="349.7" font-family="Liberation Sans" font-size="17" font-weight="bold" fill="#10108c" text-anchor="middle">V</text><path d="M444 329.5h5M446.5 327v5" stroke="#2288a4" stroke-width="1" shape-rendering="crispEdges"/><rect x="453" y="323" width="1" height="1" fill="#ff0000"/><rect x="453" y="325" width="1" height="1" fill="#ff0000"/><rect x="455" y="323" width="1" height="1" fill="#ff0000"/><rect x="455" y="325" width="1" height="1" fill="#ff0000"/><rect x="453" y="363" width="1" height="1" fill="#ff0000"/><rect x="453" y="365" width="1" height="1" fill="#ff0000"/><rect x="455" y="363" width="1" height="1" fill="#ff0000"/><rect x="455" y="365" width="1" height="1" fill="#ff0000"/><text x="469" y="361" font-family="Liberation Sans" font-size="10.67" fill="#a428a4" text-anchor="start" >VM1</text><path d="M286.5 396.5 L286.5 404.5" stroke="#008000" stroke-width="1" fill="none" shape-rendering="crispEdges"/><path d="M286.5 428.5 L286.5 436.5" stroke="#008000" stroke-width="1" fill="none" shape-rendering="crispEdges"/><circle cx="286.5" cy="416.5" r="12" fill="none" stroke="#008000" stroke-width="1.1"/><path d="M274 427L278 424M295 409L303 403M303 403h-5M303 403v5" stroke="#008000" stroke-width="1.1" fill="none"/><text x="286.5" y="421.7" font-family="Liberation Sans" font-size="17" font-weight="bold" fill="#10108c" text-anchor="middle">V</text><path d="M276 401.5h5M278.5 399v5" stroke="#2288a4" stroke-width="1" shape-rendering="crispEdges"/><rect x="285" y="395" width="1" height="1" fill="#ff0000"/><rect x="285" y="397" width="1" height="1" fill="#ff0000"/><rect x="287" y="395" width="1" height="1" fill="#ff0000"/><rect x="287" y="397" width="1" height="1" fill="#ff0000"/><rect x="285" y="435" width="1" height="1" fill="#ff0000"/><rect x="285" y="437" width="1" height="1" fill="#ff0000"/><rect x="287" y="435" width="1" height="1" fill="#ff0000"/><rect x="287" y="437" width="1" height="1" fill="#ff0000"/><text x="301" y="433" font-family="Liberation Sans" font-size="10.67" fill="#a428a4" text-anchor="start" >VM2</text></svg>
<div class="a" style="left:1414px;top:140px;width:17px;height:657px;background:#f0f0f0;"></div>
<div class="a" style="left:6px;top:781px;width:1408px;height:16px;background:#f0f0f0;"></div>
<div class="a" style="left:1415px;top:157px;width:15px;height:39px;background:#cdcdcd;"></div>
<div class="a" style="left:23px;top:781px;width:193px;height:15px;background:#cdcdcd;"></div>
<svg style="left:1417px;top:145px" width="10" height="7"><path d="M1 6 L5 2 L9 6" stroke="#606060" stroke-width="1.8" fill="none"/></svg>
<svg style="left:1417px;top:768px" width="10" height="7"><path d="M1 1 L5 5 L9 1" stroke="#606060" stroke-width="1.8" fill="none"/></svg>
<svg style="left:10px;top:784px" width="7" height="10"><path d="M6 1 L2 5 L6 9" stroke="#606060" stroke-width="1.8" fill="none"/></svg>
<svg style="left:1401px;top:784px" width="7" height="10"><path d="M1 1 L5 5 L1 9" stroke="#606060" stroke-width="1.8" fill="none"/></svg>
<div class="a" style="left:6px;top:797px;width:1425px;height:20px;background:#f0f0f0;"></div>
<div class="a" style="left:6px;top:797px;width:1425px;height:1px;background:#fff;"></div>
<div class="a" style="left:6px;top:798px;width:1425px;height:1px;background:#e4e4e4;"></div>
<div class="a" style="left:6px;top:815px;width:1425px;height:1px;background:#fff;"></div>
<div class="a" style="left:8px;top:797px;width:54px;height:18px;background:#f0f0f0;border-left:1px solid #fff;border-right:1px solid #696969;border-bottom:1px solid #696969;box-shadow:inset -1px -1px 0 #a0a0a0;border-radius:0 0 3px 3px"></div>
<div class="t" style="left:14.6px;top:800px;font-size:12.5px;color:#000;transform:scaleX(0.838);transform-origin:0 0;will-change:transform;-webkit-text-stroke:0.15px #000">Noname</div>
<div class="a" style="left:6px;top:817px;width:1425px;height:23px;background:#f0f0f0;"></div>
<div class="a" style="left:6px;top:839px;width:1425px;height:1px;background:#a0a0a0;"></div>
<div class="a" style="left:10px;top:818px;width:24px;height:19px;background:#f8f8f8;border-top:1px solid #808080;border-left:1px solid #808080"></div>
<svg style="left:10px;top:818px" width="26" height="20" viewBox="0 0 26 20" ><path d="M3 10.500h6.500M9.500 6.500v8M9.500 9l4.500-3.500M9.500 12l4.500 3.500" stroke="#000" stroke-width="1.200" fill="none"/><path d="M14.500 16l-3.500-0.500 2-2.500z" fill="#000"/><path d="M8.500 4.500h6l3 3v6l-3 3h-6l-3-3v-6z" stroke="#000" stroke-width="1.200" fill="none"/><path d="M14 5l3-2h5v16" stroke="#000" stroke-width="1.200" fill="none"/><rect x="20.500" y="7" width="2.500" height="7" fill="#808000" stroke="#000" stroke-width="0.600"/></svg>
<svg style="left:40px;top:818px" width="26" height="20" viewBox="0 0 26 20" ><path d="M0.500 19V0.500H25" stroke="#000" stroke-width="1.400" fill="none" shape-rendering="crispEdges"/><path d="M4.500 3v15" stroke="#0000e0" stroke-width="1.200"/><path d="M3 16.500h22" stroke="#0000e0" stroke-width="1.400"/><path d="M3.500 5v1M3.500 9v1M3.500 13v1M8 17.500h1M13 17.500h1M18 17.500h1M23 17.500h1" stroke="#00c0c0" stroke-width="1.200"/><path d="M5 7.500l3-3.500 5 4 4-3 3 2.500h5" stroke="#ff0000" stroke-width="1.300" fill="none"/><path d="M6 14.500v-4h5v4h5v-4h5v4h4" stroke="#0000e0" stroke-width="1.500" fill="none"/></svg>
<div class="btn" style="left:68px;top:818px;width:25px;height:19px"></div>
<div class="t" style="left:72.6px;top:822px;font-size:12.5px;color:#000;transform:scaleX(0.787);transform-origin:0 0;will-change:transform;-webkit-text-stroke:0.15px #000">Exit</div>
<div class="a" style="left:96px;top:818px;width:1px;height:21px;background:#fff;"></div>
<div class="a" style="left:97px;top:817px;width:1231px;height:22px;border-top:1px solid #a0a0a0;border-left:1px solid #a0a0a0;border-bottom:1px solid #a0a0a0"></div>
<div class="t" style="left:102.6px;top:822px;font-size:12.5px;color:#000;transform:scaleX(0.832);transform-origin:0 0;will-change:transform;-webkit-text-stroke:0.15px #000">(553.29m,3.73)</div>
<div class="a" style="left:1328px;top:817px;width:102px;height:23px;border-top:1px solid #a0a0a0;border-left:1px solid #a0a0a0;border-right:2px solid #a0a0a0;border-bottom:2px solid #a0a0a0"></div>
<div class="t" style="left:1332.4px;top:822px;font-size:12.5px;color:#000;transform:scaleX(0.863);transform-origin:0 0;will-change:transform;-webkit-text-stroke:0.15px #000">X: 1262&nbsp; Y: 291</div>
<div class="a" style="left:591px;top:155px;width:662px;height:577px;background:#fafafa;border:1px solid #b4b4b4;box-shadow:0 0 0 0 #000"></div>
<div class="a" style="left:592px;top:156px;width:660px;height:28px;background:#fcfcfc;"></div>
<svg style="left:601px;top:162px" width="16" height="16" viewBox="0 0 16 16" shape-rendering="crispEdges"><rect width="16" height="16" fill="#c0c0c0"/><rect x="1" y="2" width="1" height="1" fill="#00ff00"/><rect x="3" y="3" width="1" height="1" fill="#00ff00"/><rect x="4" y="4" width="1" height="1" fill="#00ff00"/><rect x="4" y="5" width="1" height="1" fill="#00ff00"/><rect x="6" y="7" width="1" height="1" fill="#00ff00"/><rect x="8" y="7" width="1" height="1" fill="#00ff00"/><rect x="9" y="6" width="1" height="1" fill="#00ff00"/><rect x="10" y="5" width="1" height="1" fill="#00ff00"/><rect x="11" y="4" width="1" height="1" fill="#00ff00"/><rect x="13" y="2" width="1" height="1" fill="#00ff00"/><rect x="15" y="3" width="1" height="1" fill="#00ff00"/><rect x="0" y="8" width="1" height="1" fill="#800080"/><rect x="2" y="7" width="1" height="1" fill="#800080"/><rect x="7" y="4" width="1" height="1" fill="#800080"/><rect x="8" y="4" width="1" height="1" fill="#800080"/><rect x="9" y="3" width="1" height="1" fill="#800080"/><rect x="10" y="3" width="1" height="1" fill="#800080"/><rect x="11" y="2" width="1" height="1" fill="#800080"/><rect x="12" y="1" width="1" height="1" fill="#800080"/><rect x="14" y="0" width="1" height="1" fill="#800080"/><rect x="15" y="0" width="1" height="1" fill="#800080"/><rect x="0" y="9" width="5" height="1" fill="#ff00ff"/><rect x="9" y="9" width="6" height="1" fill="#ff00ff"/><rect x="4" y="11" width="1" height="4" fill="#0000ff"/><rect x="9" y="11" width="1" height="4" fill="#0000ff"/><rect x="14" y="11" width="1" height="4" fill="#0000ff"/></svg>
<div class="t" style="left:850px;top:163px;font-size:15px;color:#1e1e1e;transform:scaleX(0.974);transform-origin:0 0;will-change:transform;-webkit-text-stroke:0.15px #1e1e1e">Noname - TR result22</div>
<div class="a" style="left:1157px;top:168px;width:8px;height:2px;background:#000;"></div>
<div class="a" style="left:1183px;top:162px;width:10px;height:8px;border:1px solid #000;border-top:2px solid #000"></div>
<div class="a" style="left:1201px;top:156px;width:45px;height:20px;background:#c75050;"></div>
<svg style="left:1220px;top:163px" width="8" height="7" viewBox="0 0 8 7"><path d="M0.5 0.3 L7.5 6.7 M7.5 0.3 L0.5 6.7" stroke="#fff" stroke-width="1.8" fill="none"/></svg>
<div class="a" style="left:598px;top:185px;width:648px;height:21px;background:#f5f6f7;border:1px solid #e2e3e4;border-bottom:0"></div>
<div class="t" style="left:606px;top:190px;font-size:12px;color:#000;">File</div>
<div class="t" style="left:638px;top:190px;font-size:12px;color:#000;">Edit</div>
<div class="t" style="left:671px;top:190px;font-size:12px;color:#000;">View</div>
<div class="t" style="left:711px;top:190px;font-size:12px;color:#6d6d6d;">Process</div>
<div class="t" style="left:765px;top:190px;font-size:12px;color:#000;">Help</div>
<div class="a" style="left:598px;top:205px;width:647px;height:39px;background:#f0f0f0;"></div>
<div class="a" style="left:598px;top:205px;width:647px;height:1px;background:#fff;"></div>
<div class="a" style="left:598px;top:243px;width:647px;height:1px;background:#a0a0a0;"></div>
<div class="btn" style="left:604px;top:213px;width:24px;height:25px"></div>
<div class="btn" style="left:628px;top:213px;width:24px;height:25px"></div>
<div class="btn" style="left:662px;top:213px;width:24px;height:25px"></div>
<div class="btn" style="left:686px;top:213px;width:24px;height:25px"></div>
<div class="btnp" style="left:715px;top:213px;width:24px;height:25px"></div>
<div class="btn" style="left:739px;top:213px;width:24px;height:25px"></div>
<div class="btn" style="left:764px;top:213px;width:24px;height:25px"></div>
<div class="btn" style="left:788px;top:213px;width:24px;height:25px"></div>
<div class="btn" style="left:812px;top:213px;width:24px;height:25px"></div>
<div class="btn" style="left:836px;top:213px;width:24px;height:25px"></div>
<div class="btn" style="left:860px;top:213px;width:24px;height:25px"></div>
<div class="btn" style="left:884px;top:213px;width:24px;height:25px"></div>
<div class="btn" style="left:908px;top:213px;width:24px;height:25px"></div>
<div class="btn" style="left:932px;top:213px;width:24px;height:25px"></div>
<div class="btn" style="left:960px;top:213px;width:24px;height:25px"></div>
<div class="btn" style="left:984px;top:213px;width:24px;height:25px"></div>
<div class="btn" style="left:1013px;top:213px;width:24px;height:25px"></div>
<div class="btn" style="left:1038px;top:213px;width:24px;height:25px"></div>
<div class="btn" style="left:1063px;top:213px;width:24px;height:25px"></div>
<div class="btn" style="left:1093px;top:216px;width:13px;height:21px"></div>
<div class="btn" style="left:1106px;top:213px;width:21px;height:13px"></div>
<div class="btn" style="left:1106px;top:225px;width:21px;height:13px"></div>
<div class="btn" style="left:1127px;top:216px;width:13px;height:21px"></div>
<svg style="left:0;top:0" width="1438" height="250" viewBox="0 0 1438 250"><path d="M1101.500 222v9l-5-4.500z" fill="#000"/><path d="M1131.500 222v9l5-4.500z" fill="#000"/><path d="M1112 222.500h9l-4.500-5z" fill="#000"/><path d="M1112 229.500h9l-4.500 5z" fill="#000"/><path d="M608.500 230.500v-8q0-1.500 1.500-1.500h3.500l1.500 1.500h4.500q1.500 0 1.500 1.500v1.500" fill="#ffff90" stroke="#000" stroke-width="1.300"/><path d="M608.500 231.500l3-6.500h13l-3.500 6.500z" fill="#ffff90" stroke="#000" stroke-width="1.300" stroke-linejoin="round"/><rect x="633.500" y="219.500" width="13" height="13" rx="1" fill="#0000ff" stroke="#000"/><rect x="636" y="220" width="8" height="6" fill="#fff"/><rect x="637" y="229" width="6" height="3.500" fill="#c8c8c8"/><rect x="638" y="230" width="2" height="2.500" fill="#0000c0"/><path d="M667.500 218.500h6l2.500 2.500v8.500h-8.500z" fill="#fff" stroke="#000"/><path d="M670 222.500h3M670 224.500h2M670 226.500h2" stroke="#808080"/><path d="M672.500 223.500h6l2.500 2.500v8.500h-8.500z" fill="#ffff90" stroke="#000"/><path d="M674 227.500h6M674 229.500h6M674 231.500h6M676.500 226v7" stroke="#a0a060"/><path d="M690.500 219.500h11v12.500h-11z" fill="#dcdcdc" stroke="#000"/><rect x="693" y="217" width="6" height="3" rx="1" fill="#00a0ff"/><rect x="694" y="217" width="4" height="1" fill="#0040ff"/><path d="M695 222l5 5.500" stroke="#0000c0" stroke-width="1.800"/><path d="M701.500 224v5h-5z" fill="#0000c0"/><path d="M699.500 224.500h5l2.500 2.500v7.500h-7.500z" fill="#ffff90" stroke="#000"/><path d="M701 228.500h5M701 230.500h5M701 232.500h5M703.500 227v7" stroke="#a0a060"/><path d="M725.500 221.500v9.500l2.300-2.200 1.700 3.700 1.700-0.800-1.700-3.600h3.200z" fill="#000"/><circle cx="749.5" cy="224" r="5" fill="#fff" stroke="#000" stroke-width="1.400"/><path d="M747.0 224h5" stroke="#f00000" stroke-width="1.300"/><path d="M749.5 221.500v5" stroke="#f00000" stroke-width="1.300"/><path d="M753.3 227.800l6 5.700" stroke="#000" stroke-width="2.400"/><path d="M753.1 227.600l1.500 1.500" stroke="#e0e000" stroke-width="1.200"/><circle cx="774.5" cy="224" r="5" fill="#fff" stroke="#000" stroke-width="1.400"/><path d="M772.0 224h5" stroke="#f00000" stroke-width="1.300"/><path d="M778.3 227.800l6 5.700" stroke="#000" stroke-width="2.400"/><path d="M778.1 227.600l1.500 1.500" stroke="#e0e000" stroke-width="1.200"/><text x="767.500" y="236.300" font-family="Liberation Sans" font-size="6.500" font-weight="bold" textLength="15" lengthAdjust="spacingAndGlyphs">100%</text><rect x="793" y="221" width="1" height="1" fill="#bcbcbc"/><rect x="793" y="225" width="1" height="1" fill="#bcbcbc"/><rect x="793" y="229" width="1" height="1" fill="#bcbcbc"/><rect x="797" y="221" width="1" height="1" fill="#bcbcbc"/><rect x="797" y="225" width="1" height="1" fill="#bcbcbc"/><rect x="797" y="229" width="1" height="1" fill="#bcbcbc"/><rect x="801" y="221" width="1" height="1" fill="#bcbcbc"/><rect x="801" y="225" width="1" height="1" fill="#bcbcbc"/><rect x="801" y="229" width="1" height="1" fill="#bcbcbc"/><rect x="805" y="221" width="1" height="1" fill="#bcbcbc"/><rect x="805" y="225" width="1" height="1" fill="#bcbcbc"/><rect x="805" y="229" width="1" height="1" fill="#bcbcbc"/><path d="M818 220.500h12v4h-2v-2h-2.700v7.300h2.200v2h-7v-2h2.200v-7.300h-2.700v2h-2z" fill="#000"/><path d="M838 223.500q3 3.500 6.500 0.500q5-7 8.500-6.800q2 0.300 4.500 3.300" stroke="#000" fill="none" stroke-width="1.100"/><path d="M848.5 236v-9.500l4-5.500" stroke="#000" fill="none" stroke-width="1.200"/><path d="M853.5 219.500l-3.500 1.500 2.500 2z" fill="#000" stroke="#000" stroke-width="0.600"/><path d="M838 229.500h10" stroke="#000" fill="none" stroke-width="1.100"/><path d="M862 223.500q3 3.500 6.500 0.500q5-7 8.500-6.800q2 0.300 4.500 3.300" stroke="#000" fill="none" stroke-width="1.100"/><path d="M872.5 236v-9.500l4-5.500" stroke="#000" fill="none" stroke-width="1.200"/><path d="M877.5 219.500l-3.500 1.500 2.500 2z" fill="#000" stroke="#000" stroke-width="0.600"/><path d="M862 229.500h10" stroke="#000" fill="none" stroke-width="1.100"/><path d="M840 231.500h6v1.500h-0.800v-0.700h-1.500v3h1v0.900h-3.400v-0.900h1v-3h-1.500v0.700h-0.800z" fill="#000"/><text x="864.500" y="236.500" font-family="Liberation Sans" font-size="7.500" font-weight="bold">?</text><path d="M886 223.500q3 3.500 6.500 0.500q5-7 8.500-6.800q2 0.300 4.500 3.300" stroke="#000" fill="none" stroke-width="1.100"/><path d="M893.500 236.500v-8h12.500" stroke="#000" fill="none" stroke-width="1.100"/><path d="M895 230.500h5" stroke="#c00000" stroke-width="1.300"/><path d="M895 233.500h5" stroke="#008000" stroke-width="1.300"/><path d="M902.500 229.500l2.500 2.500M905 229.500l-2.500 2.500M902.500 233l2.500 2.500M905 233l-2.500 2.500" stroke="#000" fill="none" stroke-width="0.800"/><path d="M912 222.500l15.500 7.500" stroke="#000" fill="none" stroke-width="1.100"/><circle cx="943.500" cy="226.500" r="7.200" stroke="#000" fill="none" stroke-width="1.100"/><path d="M963 228.500h20M973.5 223v13" stroke="#f00000" stroke-width="1.300"/><path d="M963.5 221l19.500 14" stroke="#000" stroke-width="1.100"/><text x="971" y="222.500" font-family="Liberation Sans" font-size="10" fill="#f00000">a</text><path d="M987.5 228.500h20M998.0 223v13" stroke="#0000f0" stroke-width="1.300"/><path d="M988.0 221l19.500 14" stroke="#000" stroke-width="1.100"/><text x="995.5" y="222.500" font-family="Liberation Sans" font-size="10" fill="#0000f0">b</text><path d="M1016.500 219h7M1020 215.500v7" stroke="#c80000" stroke-width="2"/><path d="M1016 228.500q4 1.500 8-2.500t10.500-5" stroke="#008000" fill="none" stroke-width="1.100"/><path d="M1016 231q4 1.500 8-2.500t10.500-5" stroke="#800000" fill="none" stroke-width="1.100"/><path d="M1016 233.500q4 1.500 8-2.500t10.500-5" stroke="#0000f0" fill="none" stroke-width="1.100"/><path d="M1041.500 219h7M1045 215.500v7" stroke="#c80000" stroke-width="2"/><path d="M1051 224.500l4 4" stroke="#000" stroke-width="3" stroke-linecap="round"/><path d="M1057.500 220.500l-3.500 3.500" stroke="#000" stroke-width="3.400" stroke-linecap="round"/><path d="M1052 226l-6.500 6.500-1 2 2-1 6.500-6.500" fill="#fff" stroke="#000" stroke-width="0.900"/><path d="M1069.500 231v-10.500l11.500 5-11.500 4" stroke="#000" fill="none" stroke-width="1.100"/></svg>
<div class="a" style="left:599px;top:244px;width:645px;height:462px;background:#fff;"></div>
<svg style="left:0;top:0" width="1438" height="848" viewBox="0 0 1438 848"><path d="M671 268.5H1187.5V638" stroke="#c0c0c0" fill="none" shape-rendering="crispEdges"/><path d="M774.5 269V638" stroke="#c0c0c0" stroke-dasharray="4 3" shape-rendering="crispEdges"/><path d="M877.5 269V638" stroke="#c0c0c0" stroke-dasharray="4 3" shape-rendering="crispEdges"/><path d="M981.5 269V638" stroke="#c0c0c0" stroke-dasharray="4 3" shape-rendering="crispEdges"/><path d="M1084.5 269V638" stroke="#c0c0c0" stroke-dasharray="4 3" shape-rendering="crispEdges"/><path d="M673 391.5H1187" stroke="#c0c0c0" stroke-dasharray="4 3" shape-rendering="crispEdges"/><path d="M673 515.5H1187" stroke="#c0c0c0" stroke-dasharray="4 3" shape-rendering="crispEdges"/><polyline points="672.5,453.0 671.0,355.9 671.5,364.8 672.0,375.8 672.5,388.7 673.0,403.0 673.5,418.5 674.0,434.8 674.5,451.5 675.0,467.3 675.5,482.6 676.0,497.2 676.5,510.9 677.0,523.2 677.5,533.9 678.0,542.7 678.5,549.5 679.0,554.0 679.5,556.3 680.0,556.1 680.5,553.6 681.0,548.8 681.5,541.7 682.0,532.7 682.5,521.8 683.0,509.3 683.5,495.5 684.0,480.8 684.5,465.4 685.0,449.5 685.5,432.8 686.0,416.6 686.5,401.2 687.0,387.0 687.5,374.4 688.0,363.6 688.5,354.9 689.0,348.5 689.5,344.5 690.0,343.0 690.5,344.1 691.0,347.7 691.5,353.7 692.0,362.1 692.5,372.6 693.0,384.9 693.5,398.8 694.0,414.0 694.5,430.1 695.0,446.8 695.5,463.6 696.0,480.1 696.5,496.1 697.0,511.1 697.5,524.7 698.0,536.7 698.5,546.8 699.0,554.7 699.5,560.2 700.0,563.3 700.5,563.9 701.0,561.9 701.5,557.4 702.0,550.5 702.5,541.4 703.0,530.2 703.5,517.2 704.0,502.8 704.5,487.3 705.0,470.9 705.5,454.2 706.0,437.4 706.5,421.0 707.0,405.4 707.5,390.9 708.0,377.8 708.5,366.5 709.0,357.1 709.5,350.1 710.0,345.4 710.5,343.2 711.0,343.5 711.5,346.4 712.0,351.8 712.5,359.5 713.0,369.4 713.5,381.3 714.0,394.8 714.5,409.7 715.0,425.6 715.5,442.1 716.0,458.9 716.5,475.6 717.0,491.7 717.5,507.0 718.0,521.0 718.5,533.5 719.0,544.1 719.5,552.7 720.0,558.9 720.5,562.7 721.0,564.0 721.5,562.7 722.0,558.9 722.5,552.7 723.0,544.1 723.5,533.5 724.0,521.0 724.5,507.0 725.0,491.7 725.5,475.6 726.0,458.9 726.5,442.1 727.0,425.6 727.5,409.7 728.0,394.8 728.5,381.3 729.0,369.4 729.5,359.5 730.0,351.8 730.5,346.4 731.0,343.5 731.5,343.2 732.0,345.4 732.5,350.1 733.0,357.1 733.5,366.5 734.0,377.8 734.5,390.9 735.0,405.4 735.5,421.0 736.0,437.4 736.5,454.2 737.0,470.9 737.5,487.3 738.0,502.8 738.5,517.2 739.0,530.2 739.5,541.4 740.0,550.5 740.5,557.4 741.0,561.9 741.5,563.9 742.0,563.3 742.5,560.2 743.0,554.7 743.5,546.8 744.0,536.7 744.5,524.7 745.0,511.1 745.5,496.1 746.0,480.1 746.5,463.6 747.0,446.8 747.5,430.1 748.0,414.0 748.5,398.8 749.0,384.9 749.5,372.6 750.0,362.1 750.5,353.7 751.0,347.7 751.5,344.1 752.0,343.0 752.5,344.5 753.0,348.5 753.5,354.9 754.0,363.6 754.5,374.4 755.0,387.0 755.5,401.2 756.0,416.6 756.5,432.8 757.0,449.5 757.5,466.3 758.0,482.7 758.5,498.6 759.0,513.3 759.5,526.7 760.0,538.4 760.5,548.2 761.0,555.7 761.5,560.9 762.0,563.6 762.5,563.8 763.0,561.4 763.5,556.5 764.0,549.2 764.5,539.7 765.0,528.2 765.5,515.0 766.0,500.4 766.5,484.7 767.0,468.3 767.5,451.5 768.0,434.8 768.5,418.5 769.0,403.0 769.5,388.7 770.0,375.8 770.5,364.8 771.0,355.9 771.5,349.1 772.0,344.8 772.5,343.1 773.0,343.8 773.5,347.1 774.0,352.9 774.5,361.0 775.0,371.2 775.5,383.3 776.0,397.1 776.5,412.1 777.0,428.2 777.5,444.8 778.0,461.6 778.5,478.2 779.0,494.2 779.5,509.3 780.0,523.1 780.5,535.3 781.0,545.7 781.5,553.8 782.0,559.7 782.5,563.1 783.0,564.0 783.5,562.3 784.0,558.1 784.5,551.5 785.0,542.6 785.5,531.6 786.0,518.9 786.5,504.6 787.0,489.2 787.5,472.9 788.0,456.2 788.5,439.4 789.0,423.0 789.5,407.2 790.0,392.5 790.5,379.3 791.0,367.7 791.5,358.1 792.0,350.8 792.5,345.8 793.0,343.3 793.5,343.3 794.0,345.9 794.5,351.0 795.0,358.5 795.5,368.1 796.0,379.8 796.5,393.1 797.0,407.8 797.5,423.6 798.0,440.1 798.5,456.9 799.0,473.6 799.5,489.8 800.0,505.2 800.5,519.4 801.0,532.1 801.5,543.0 802.0,551.8 802.5,558.3 803.0,562.4 803.5,564.0 804.0,563.0 804.5,559.5 805.0,553.6 805.5,545.3 806.0,534.9 806.5,522.6 807.0,508.7 807.5,493.6 808.0,477.5 808.5,460.9 809.0,444.1 809.5,427.5 810.0,411.5 810.5,396.5 811.0,382.8 811.5,370.8 812.0,360.6 812.5,352.6 813.0,346.9 813.5,343.7 814.0,343.1 814.5,345.0 815.0,349.4 815.5,356.2 816.0,365.2 816.5,376.3 817.0,389.2 817.5,403.6 818.0,419.1 818.5,435.4 819.0,452.2 819.5,468.9 820.0,485.3 820.5,501.0 821.0,515.6 821.5,528.7 822.0,540.1 822.5,549.5 823.0,556.7 823.5,561.5 824.0,563.8 824.5,563.5 825.0,560.7 825.5,555.5 826.0,547.8 826.5,538.0 827.0,526.2 827.5,512.8 828.0,498.0 828.5,482.1 829.0,465.6 829.5,448.8 830.0,432.1 830.5,415.9 831.0,400.6 831.5,386.5 832.0,374.0 832.5,363.2 833.0,354.6 833.5,348.3 834.0,344.4 834.5,343.0 835.0,344.2 835.5,347.9 836.0,354.0 836.5,362.5 837.0,373.0 837.5,385.4 838.0,399.4 838.5,414.7 839.0,430.8 839.5,447.4 840.0,464.2 840.5,480.8 841.0,496.7 841.5,511.6 842.0,525.2 842.5,537.1 843.0,547.1 843.5,554.9 844.0,560.4 844.5,563.4 845.0,563.9 845.5,561.8 846.0,557.2 846.5,550.2 847.0,541.0 847.5,529.7 848.0,516.7 848.5,502.2 849.0,486.6 849.5,470.3 850.0,453.5 850.5,436.7 851.0,420.4 851.5,404.8 852.0,390.3 852.5,377.3 853.0,366.0 853.5,356.8 854.0,349.8 854.5,345.2 855.0,343.1 855.5,343.6 856.0,346.6 856.5,352.1 857.0,359.9 857.5,369.9 858.0,381.8 858.5,395.4 859.0,410.3 859.5,426.2 860.0,442.8 860.5,459.6 861.0,476.2 861.5,492.3 862.0,507.6 862.5,521.6 863.0,534.0 863.5,544.5 864.0,553.0 864.5,559.1 865.0,562.8 865.5,564.0 866.0,562.6 866.5,558.7 867.0,552.4 867.5,543.8 868.0,533.0 868.5,520.5 869.0,506.4 869.5,491.1 870.0,474.9 870.5,458.2 871.0,441.4 871.5,424.9 872.0,409.0 872.5,394.2 873.0,380.8 873.5,369.0 874.0,359.2 874.5,351.5 875.0,346.3 875.5,343.5 876.0,343.2 876.5,345.5 877.0,350.3 877.5,357.5 878.0,366.9 878.5,378.3 879.0,391.4 879.5,406.0 880.0,421.7 880.5,438.1 881.0,454.8 881.5,471.6 882.0,487.9 882.5,503.4 883.0,517.8 883.5,530.7 884.0,541.8 884.5,550.8 885.0,557.6 885.5,562.0 886.0,563.9 886.5,563.3 887.0,560.1 887.5,554.4 888.0,546.4 888.5,536.2 889.0,524.2 889.5,510.5 890.0,495.5 890.5,479.5 891.0,462.9 891.5,446.1 892.0,429.5 892.5,413.4 893.0,398.3 893.5,384.4 894.0,372.1 894.5,361.7 895.0,353.4 895.5,347.5 896.0,344.0 896.5,343.0 897.0,344.6 897.5,348.7 898.0,355.2 898.5,364.0 899.0,374.9 899.5,387.6 900.0,401.8 900.5,417.2 901.0,433.4 901.5,450.1 902.0,466.9 902.5,483.4 903.0,499.2 903.5,513.9 904.0,527.2 904.5,538.9 905.0,548.5 905.5,556.0 906.0,561.1 906.5,563.7 907.0,563.7 907.5,561.2 908.0,556.2 908.5,548.9 909.0,539.3 909.5,527.7 910.0,514.5 910.5,499.8 911.0,484.0 911.5,467.6 912.0,450.8 912.5,434.1 913.0,417.8 913.5,402.4 914.0,388.1 914.5,375.4 915.0,364.4 915.5,355.5 916.0,348.9 916.5,344.7 917.0,343.0 917.5,343.9 918.0,347.3 918.5,353.2 919.0,361.3 919.5,371.7 920.0,383.9 920.5,397.7 921.0,412.8 921.5,428.8 922.0,445.4 922.5,462.2 923.0,478.8 923.5,494.9 924.0,509.9 924.5,523.7 925.0,535.8 925.5,546.0 926.0,554.1 926.5,559.9 927.0,563.2 927.5,563.9 928.0,562.2 928.5,557.9 929.0,551.1 929.5,542.2 930.0,531.2 930.5,518.3 931.0,504.0 931.5,488.5 932.0,472.2 932.5,455.5 933.0,438.7 933.5,422.3 934.0,406.6 934.5,392.0 935.0,378.8 935.5,367.3 936.0,357.8 936.5,350.5 937.0,345.6 937.5,343.2 938.0,343.4 938.5,346.1 939.0,351.3 939.5,358.8 940.0,368.6 940.5,380.3 941.0,393.7 941.5,408.4 942.0,424.3 942.5,440.7 943.0,457.5 943.5,474.2 944.0,490.4 944.5,505.8 945.0,520.0 945.5,532.6 946.0,543.4 946.5,552.1 947.0,558.5 947.5,562.5 948.0,564.0 948.5,562.9 949.0,559.3 949.5,553.3 950.0,544.9 950.5,534.4 951.0,522.1 951.5,508.2 952.0,493.0 952.5,476.9 953.0,460.2 953.5,443.4 954.0,426.9 954.5,410.9 955.0,395.9 955.5,382.3 956.0,370.3 956.5,360.2 957.0,352.3 957.5,346.8 958.0,343.7 958.5,343.1 959.0,345.1 959.5,349.6 960.0,356.5 960.5,365.6 961.0,376.8 961.5,389.8 962.0,404.2 962.5,419.7 963.0,436.1 963.5,452.8 964.0,469.6 964.5,486.0 965.0,501.6 965.5,516.1 966.0,529.2 966.5,540.5 967.0,549.9 967.5,556.9 968.0,561.6 968.5,563.8 969.0,563.5 969.5,560.6 970.0,555.2 970.5,547.5 971.0,537.6 971.5,525.7 972.0,512.2 972.5,497.3 973.0,481.4 973.5,464.9 974.0,448.1 974.5,431.4 975.0,415.3 975.5,400.0 976.0,386.0 976.5,373.5 977.0,362.9 977.5,354.3 978.0,348.1 978.5,344.3 979.0,343.0 979.5,344.3 980.0,348.1 980.5,354.3 981.0,362.9 981.5,373.5 982.0,386.0 982.5,400.0 983.0,415.3 983.5,431.4 984.0,448.1 984.5,464.9 985.0,481.4 985.5,497.3 986.0,512.2 986.5,525.7 987.0,537.6 987.5,547.5 988.0,555.2 988.5,560.6 989.0,563.5 989.5,563.8 990.0,561.6 990.5,556.9 991.0,549.9 991.5,540.5 992.0,529.2 992.5,516.1 993.0,501.6 993.5,486.0 994.0,469.6 994.5,452.8 995.0,436.1 995.5,419.7 996.0,404.2 996.5,389.8 997.0,376.8 997.5,365.6 998.0,356.5 998.5,349.6 999.0,345.1 999.5,343.1 1000.0,343.7 1000.5,346.8 1001.0,352.3 1001.5,360.2 1002.0,370.3 1002.5,382.3 1003.0,395.9 1003.5,410.9 1004.0,426.9 1004.5,443.4 1005.0,460.2 1005.5,476.9 1006.0,493.0 1006.5,508.2 1007.0,522.1 1007.5,534.4 1008.0,544.9 1008.5,553.3 1009.0,559.3 1009.5,562.9 1010.0,564.0 1010.5,562.5 1011.0,558.5 1011.5,552.1 1012.0,543.4 1012.5,532.6 1013.0,520.0 1013.5,505.8 1014.0,490.4 1014.5,474.2 1015.0,457.5 1015.5,440.7 1016.0,424.3 1016.5,408.4 1017.0,393.7 1017.5,380.3 1018.0,368.6 1018.5,358.8 1019.0,351.3 1019.5,346.1 1020.0,343.4 1020.5,343.2 1021.0,345.6 1021.5,350.5 1022.0,357.8 1022.5,367.3 1023.0,378.8 1023.5,392.0 1024.0,406.6 1024.5,422.3 1025.0,438.7 1025.5,455.5 1026.0,472.2 1026.5,488.5 1027.0,504.0 1027.5,518.3 1028.0,531.2 1028.5,542.2 1029.0,551.1 1029.5,557.9 1030.0,562.2 1030.5,563.9 1031.0,563.2 1031.5,559.9 1032.0,554.1 1032.5,546.0 1033.0,535.8 1033.5,523.7 1034.0,509.9 1034.5,494.9 1035.0,478.8 1035.5,462.2 1036.0,445.4 1036.5,428.8 1037.0,412.8 1037.5,397.7 1038.0,383.9 1038.5,371.7 1039.0,361.3 1039.5,353.2 1040.0,347.3 1040.5,343.9 1041.0,343.0 1041.5,344.7 1042.0,348.9 1042.5,355.5 1043.0,364.4 1043.5,375.4 1044.0,388.1 1044.5,402.4 1045.0,417.8 1045.5,434.1 1046.0,450.8 1046.5,467.6 1047.0,484.0 1047.5,499.8 1048.0,514.5 1048.5,527.7 1049.0,539.3 1049.5,548.9 1050.0,556.2 1050.5,561.2 1051.0,563.7 1051.5,563.7 1052.0,561.1 1052.5,556.0 1053.0,548.5 1053.5,538.9 1054.0,527.2 1054.5,513.9 1055.0,499.2 1055.5,483.4 1056.0,466.9 1056.5,450.1 1057.0,433.4 1057.5,417.2 1058.0,401.8 1058.5,387.6 1059.0,374.9 1059.5,364.0 1060.0,355.2 1060.5,348.7 1061.0,344.6 1061.5,343.0 1062.0,344.0 1062.5,347.5 1063.0,353.4 1063.5,361.7 1064.0,372.1 1064.5,384.4 1065.0,398.3 1065.5,413.4 1066.0,429.5 1066.5,446.1 1067.0,462.9 1067.5,479.5 1068.0,495.5 1068.5,510.5 1069.0,524.2 1069.5,536.2 1070.0,546.4 1070.5,554.4 1071.0,560.1 1071.5,563.3 1072.0,563.9 1072.5,562.0 1073.0,557.6 1073.5,550.8 1074.0,541.8 1074.5,530.7 1075.0,517.8 1075.5,503.4 1076.0,487.9 1076.5,471.6 1077.0,454.8 1077.5,438.1 1078.0,421.7 1078.5,406.0 1079.0,391.4 1079.5,378.3 1080.0,366.9 1080.5,357.5 1081.0,350.3 1081.5,345.5 1082.0,343.2 1082.5,343.5 1083.0,346.3 1083.5,351.5 1084.0,359.2 1084.5,369.0 1085.0,380.8 1085.5,394.2 1086.0,409.0 1086.5,424.9 1087.0,441.4 1087.5,458.2 1088.0,474.9 1088.5,491.1 1089.0,506.4 1089.5,520.5 1090.0,533.0 1090.5,543.8 1091.0,552.4 1091.5,558.7 1092.0,562.6 1092.5,564.0 1093.0,562.8 1093.5,559.1 1094.0,553.0 1094.5,544.5 1095.0,534.0 1095.5,521.6 1096.0,507.6 1096.5,492.3 1097.0,476.2 1097.5,459.6 1098.0,442.8 1098.5,426.2 1099.0,410.3 1099.5,395.4 1100.0,381.8 1100.5,369.9 1101.0,359.9 1101.5,352.1 1102.0,346.6 1102.5,343.6 1103.0,343.1 1103.5,345.2 1104.0,349.8 1104.5,356.8 1105.0,366.0 1105.5,377.3 1106.0,390.3 1106.5,404.8 1107.0,420.4 1107.5,436.7 1108.0,453.5 1108.5,470.3 1109.0,486.6 1109.5,502.2 1110.0,516.7 1110.5,529.7 1111.0,541.0 1111.5,550.2 1112.0,557.2 1112.5,561.8 1113.0,563.9 1113.5,563.4 1114.0,560.4 1114.5,554.9 1115.0,547.1 1115.5,537.1 1116.0,525.2 1116.5,511.6 1117.0,496.7 1117.5,480.8 1118.0,464.2 1118.5,447.4 1119.0,430.8 1119.5,414.7 1120.0,399.4 1120.5,385.4 1121.0,373.0 1121.5,362.5 1122.0,354.0 1122.5,347.9 1123.0,344.2 1123.5,343.0 1124.0,344.4 1124.5,348.3 1125.0,354.6 1125.5,363.2 1126.0,374.0 1126.5,386.5 1127.0,400.6 1127.5,415.9 1128.0,432.1 1128.5,448.8 1129.0,465.6 1129.5,482.1 1130.0,498.0 1130.5,512.8 1131.0,526.2 1131.5,538.0 1132.0,547.8 1132.5,555.5 1133.0,560.7 1133.5,563.5 1134.0,563.8 1134.5,561.5 1135.0,556.7 1135.5,549.5 1136.0,540.1 1136.5,528.7 1137.0,515.6 1137.5,501.0 1138.0,485.3 1138.5,468.9 1139.0,452.2 1139.5,435.4 1140.0,419.1 1140.5,403.6 1141.0,389.2 1141.5,376.3 1142.0,365.2 1142.5,356.2 1143.0,349.4 1143.5,345.0 1144.0,343.1 1144.5,343.7 1145.0,346.9 1145.5,352.6 1146.0,360.6 1146.5,370.8 1147.0,382.8 1147.5,396.5 1148.0,411.5 1148.5,427.5 1149.0,444.1 1149.5,460.9 1150.0,477.5 1150.5,493.6 1151.0,508.7 1151.5,522.6 1152.0,534.9 1152.5,545.3 1153.0,553.6 1153.5,559.5 1154.0,563.0 1154.5,564.0 1155.0,562.4 1155.5,558.3 1156.0,551.8 1156.5,543.0 1157.0,532.1 1157.5,519.4 1158.0,505.2 1158.5,489.8 1159.0,473.6 1159.5,456.9 1160.0,440.1 1160.5,423.6 1161.0,407.8 1161.5,393.1 1162.0,379.8 1162.5,368.1 1163.0,358.5 1163.5,351.0 1164.0,345.9 1164.5,343.3 1165.0,343.3 1165.5,345.8 1166.0,350.8 1166.5,358.1 1167.0,367.7 1167.5,379.3 1168.0,392.5 1168.5,407.2 1169.0,423.0 1169.5,439.4 1170.0,456.2 1170.5,472.9 1171.0,489.2 1171.5,504.6 1172.0,518.9 1172.5,531.6 1173.0,542.6 1173.5,551.5 1174.0,558.1 1174.5,562.3 1175.0,564.0 1175.5,563.1 1176.0,559.7 1176.5,553.8 1177.0,545.7 1177.5,535.3 1178.0,523.1 1178.5,509.3 1179.0,494.2 1179.5,478.2 1180.0,461.6 1180.5,444.8 1181.0,428.2 1181.5,412.1 1182.0,397.1 1182.5,383.3 1183.0,371.2 1183.5,361.0 1184.0,352.9 1184.5,347.1 1185.0,343.8 1185.5,343.1 1186.0,344.8 1186.5,349.1 1187.0,355.9" fill="none" stroke="#008000" stroke-width="2" stroke-linejoin="round" shape-rendering="crispEdges"/><rect x="676.0" y="451" width="3.5" height="1" fill="#808000"/><rect x="686.3" y="454" width="3.5" height="1" fill="#808000"/><rect x="696.6" y="451" width="3.5" height="1" fill="#808000"/><rect x="706.9" y="454" width="3.5" height="1" fill="#808000"/><rect x="717.3" y="451" width="3.5" height="1" fill="#808000"/><rect x="727.6" y="454" width="3.5" height="1" fill="#808000"/><rect x="737.9" y="451" width="3.5" height="1" fill="#808000"/><rect x="748.2" y="454" width="3.5" height="1" fill="#808000"/><rect x="758.6" y="451" width="3.5" height="1" fill="#808000"/><rect x="768.9" y="454" width="3.5" height="1" fill="#808000"/><rect x="779.2" y="451" width="3.5" height="1" fill="#808000"/><rect x="789.5" y="454" width="3.5" height="1" fill="#808000"/><rect x="799.8" y="451" width="3.5" height="1" fill="#808000"/><rect x="810.1" y="454" width="3.5" height="1" fill="#808000"/><rect x="820.5" y="451" width="3.5" height="1" fill="#808000"/><rect x="830.8" y="454" width="3.5" height="1" fill="#808000"/><rect x="841.1" y="451" width="3.5" height="1" fill="#808000"/><rect x="851.4" y="454" width="3.5" height="1" fill="#808000"/><rect x="861.8" y="451" width="3.5" height="1" fill="#808000"/><rect x="872.1" y="454" width="3.5" height="1" fill="#808000"/><rect x="882.4" y="451" width="3.5" height="1" fill="#808000"/><rect x="892.7" y="454" width="3.5" height="1" fill="#808000"/><rect x="903.0" y="451" width="3.5" height="1" fill="#808000"/><rect x="913.3" y="454" width="3.5" height="1" fill="#808000"/><rect x="923.7" y="451" width="3.5" height="1" fill="#808000"/><rect x="934.0" y="454" width="3.5" height="1" fill="#808000"/><rect x="944.3" y="451" width="3.5" height="1" fill="#808000"/><rect x="954.6" y="454" width="3.5" height="1" fill="#808000"/><rect x="965.0" y="451" width="3.5" height="1" fill="#808000"/><rect x="975.3" y="454" width="3.5" height="1" fill="#808000"/><rect x="985.6" y="451" width="3.5" height="1" fill="#808000"/><rect x="995.9" y="454" width="3.5" height="1" fill="#808000"/><rect x="1006.2" y="451" width="3.5" height="1" fill="#808000"/><rect x="1016.5" y="454" width="3.5" height="1" fill="#808000"/><rect x="1026.9" y="451" width="3.5" height="1" fill="#808000"/><rect x="1037.2" y="454" width="3.5" height="1" fill="#808000"/><rect x="1047.5" y="451" width="3.5" height="1" fill="#808000"/><rect x="1057.8" y="454" width="3.5" height="1" fill="#808000"/><rect x="1068.2" y="451" width="3.5" height="1" fill="#808000"/><rect x="1078.5" y="454" width="3.5" height="1" fill="#808000"/><rect x="1088.8" y="451" width="3.5" height="1" fill="#808000"/><rect x="1099.1" y="454" width="3.5" height="1" fill="#808000"/><rect x="1109.4" y="451" width="3.5" height="1" fill="#808000"/><rect x="1119.7" y="454" width="3.5" height="1" fill="#808000"/><rect x="1130.1" y="451" width="3.5" height="1" fill="#808000"/><rect x="1140.4" y="454" width="3.5" height="1" fill="#808000"/><rect x="1150.7" y="451" width="3.5" height="1" fill="#808000"/><rect x="1161.0" y="454" width="3.5" height="1" fill="#808000"/><rect x="1171.4" y="451" width="3.5" height="1" fill="#808000"/><rect x="1181.7" y="454" width="3.5" height="1" fill="#808000"/><rect x="672" y="452" width="516" height="2" fill="#800000" shape-rendering="crispEdges"/><path d="M671.5 268V639" stroke="#000" stroke-width="1" shape-rendering="crispEdges"/><path d="M671 638.5H1188" stroke="#000" stroke-width="1" shape-rendering="crispEdges"/><rect x="671" y="353" width="2" height="99" fill="#008000" shape-rendering="crispEdges"/><path d="M658 268.5H671 M669 280.5H671 M669 293.5H671 M669 305.5H671 M669 317.5H671 M665 330.5H671 M669 342.5H671 M669 354.5H671 M669 367.5H671 M669 379.5H671 M658 391.5H671 M669 404.5H671 M669 416.5H671 M669 428.5H671 M669 441.5H671 M665 453.5H671 M669 465.5H671 M669 478.5H671 M669 490.5H671 M669 502.5H671 M658 515.5H671 M669 527.5H671 M669 539.5H671 M669 552.5H671 M669 564.5H671 M665 576.5H671 M669 589.5H671 M669 601.5H671 M669 613.5H671 M669 626.5H671 M658 638.5H671 M671.5 638V652 M681.5 638V642 M692.5 638V642 M702.5 638V642 M712.5 638V642 M723.5 638V645 M733.5 638V642 M743.5 638V642 M754.5 638V642 M764.5 638V642 M774.5 638V652 M785.5 638V642 M795.5 638V642 M805.5 638V642 M815.5 638V642 M826.5 638V645 M836.5 638V642 M846.5 638V642 M857.5 638V642 M867.5 638V642 M877.5 638V652 M888.5 638V642 M898.5 638V642 M908.5 638V642 M919.5 638V642 M929.5 638V645 M939.5 638V642 M950.5 638V642 M960.5 638V642 M970.5 638V642 M981.5 638V652 M991.5 638V642 M1001.5 638V642 M1012.5 638V642 M1022.5 638V642 M1032.5 638V645 M1043.5 638V642 M1053.5 638V642 M1063.5 638V642 M1073.5 638V642 M1084.5 638V652 M1094.5 638V642 M1104.5 638V642 M1115.5 638V642 M1125.5 638V642 M1135.5 638V645 M1146.5 638V642 M1156.5 638V642 M1166.5 638V642 M1177.5 638V642 M1187.5 638V652" stroke="#000" stroke-width="1" shape-rendering="crispEdges"/><text x="655.5" y="273" text-anchor="end" font-family="Liberation Sans" font-style="italic" font-size="16" fill="#000">4.00</text><text x="655.5" y="397" text-anchor="end" font-family="Liberation Sans" font-style="italic" font-size="16" fill="#000">3.00</text><text x="655.5" y="520" text-anchor="end" font-family="Liberation Sans" font-style="italic" font-size="16" fill="#000">2.00</text><text x="655.5" y="643" text-anchor="end" font-family="Liberation Sans" font-style="italic" font-size="16" fill="#000">1.00</text><text x="663.0" y="670" font-family="Liberation Sans" font-style="italic" font-size="16" fill="#000">0.00</text><text x="766.2" y="670" font-family="Liberation Sans" font-style="italic" font-size="16" fill="#000">100.00m</text><text x="869.4" y="670" font-family="Liberation Sans" font-style="italic" font-size="16" fill="#000">200.00m</text><text x="972.6" y="670" font-family="Liberation Sans" font-style="italic" font-size="16" fill="#000">300.00m</text><text x="1075.8" y="670" font-family="Liberation Sans" font-style="italic" font-size="16" fill="#000">400.00m</text><text x="1179.0" y="670" font-family="Liberation Sans" font-style="italic" font-size="16" fill="#000">500.00m</text><text x="957.5" y="693" text-anchor="middle" font-family="Liberation Sans" font-size="16" fill="#000">Time (s)</text><text x="618" y="448" text-anchor="middle" font-family="Liberation Sans" font-size="15.5" fill="#000" transform="rotate(-90 618 448)">Output</text></svg>
<div class="a" style="left:599px;top:706px;width:646px;height:19px;background:#f0f0f0;"></div>
<div class="a" style="left:601px;top:706px;width:69px;height:18px;background:#f0f0f0;border-left:1px solid #fff;border-right:1px solid #696969;border-bottom:1px solid #696969;box-shadow:inset -1px -1px 0 #a0a0a0;border-radius:0 0 3px 3px"></div>
<div class="a" style="left:602px;top:706px;width:66px;height:15px;border:1px dotted #000;border-top:0"></div>
<div class="t" style="left:608px;top:709px;font-size:12.5px;color:#000;transform:scaleX(0.836);transform-origin:0 0;will-change:transform;-webkit-text-stroke:0.15px #000">TR result22</div>
<div class="a" style="left:598px;top:244px;width:1px;height:481px;background:#c8c8c8;"></div>
<div class="a" style="left:598px;top:724px;width:648px;height:1px;background:#d4d4d4;"></div>
<div class="a" style="left:1245px;top:206px;width:1px;height:519px;background:#d4d4d4;"></div>
</body></html>
